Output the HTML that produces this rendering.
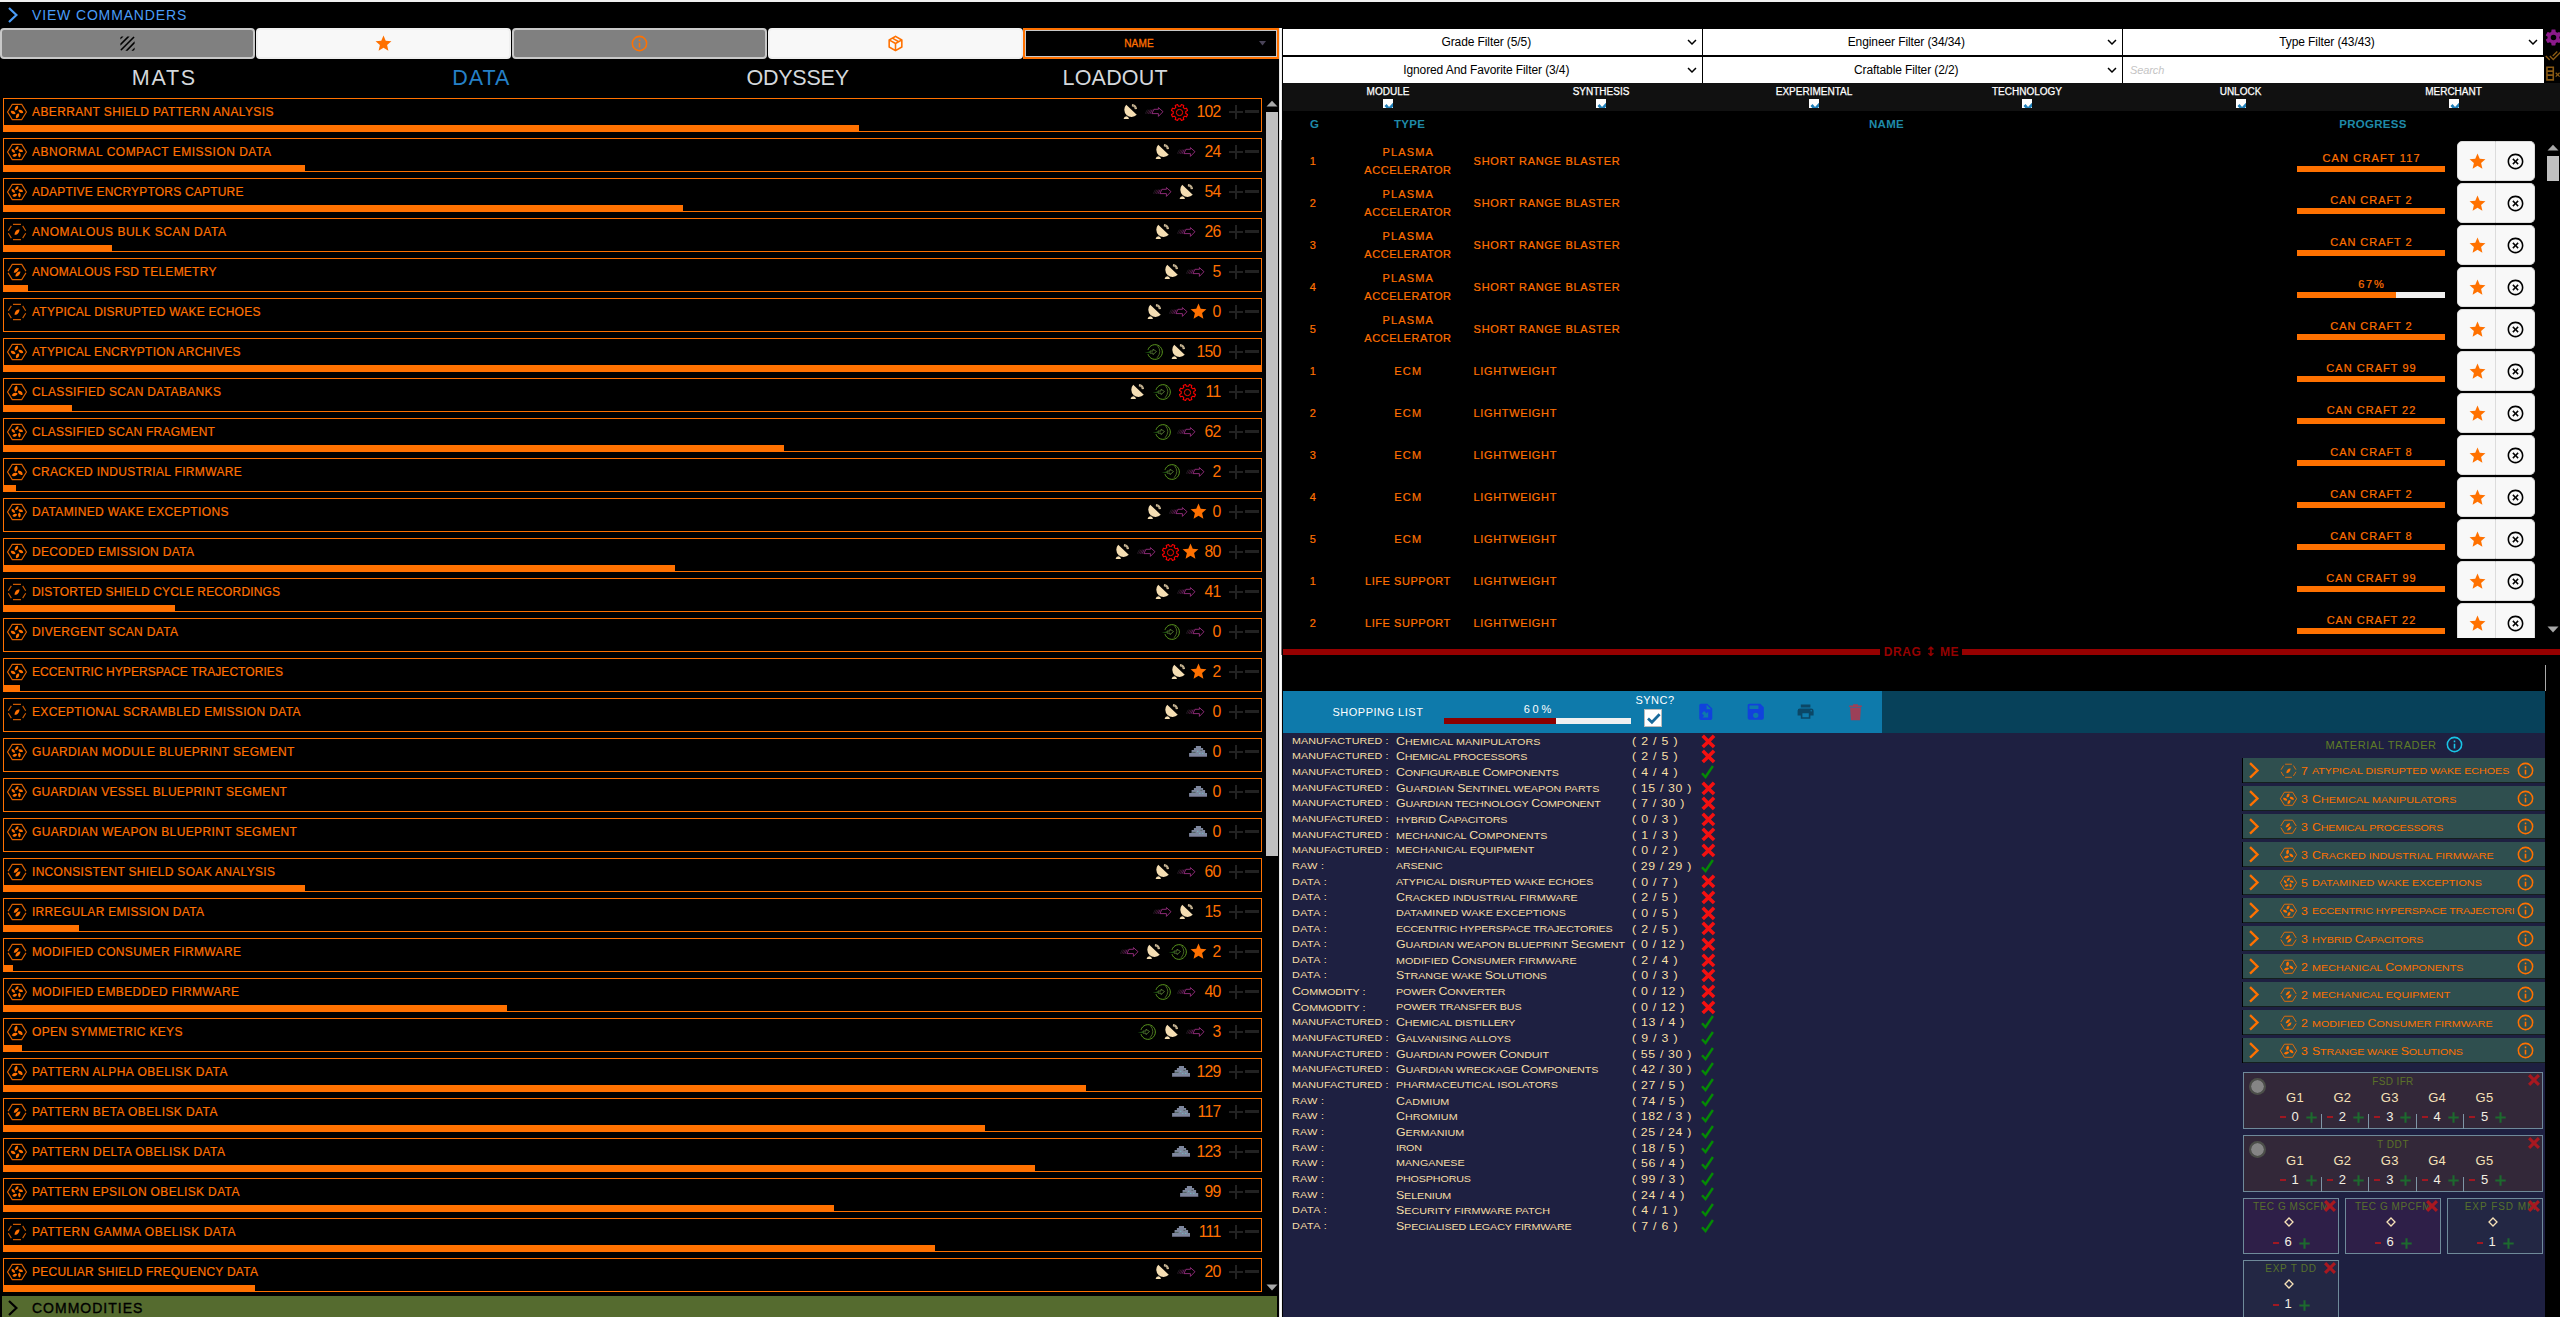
<!DOCTYPE html><html><head><meta charset="utf-8"><title>ED Materials</title><style>
*{box-sizing:border-box;margin:0;padding:0}
html,body{width:2560px;height:1317px;overflow:hidden;background:#000}
body{font-family:"Liberation Sans",sans-serif;position:relative;color:#ff7100}
.a{position:absolute}
.ic{position:absolute;overflow:visible}
.t{position:absolute;white-space:nowrap;text-transform:uppercase}
.n{position:absolute;white-space:nowrap}
/* left rows */
.row{position:absolute;left:3px;width:1259px;height:34px;border:1px solid #ff7100}
.bar{position:absolute;left:-1px;bottom:-1px;height:7px;background:#ff7100}
.rn{-webkit-text-stroke:.2px #ff7100;position:absolute;left:28px;top:0;height:26px;line-height:26px;font-size:12px;letter-spacing:.36px;white-space:nowrap}
.cnt{position:absolute;right:40.6px;top:-.2px;height:26px;line-height:26px;font-size:15.8px;white-space:nowrap;letter-spacing:-.8px}
.gi{position:absolute;left:2px;top:4px;width:22px;height:18px;color:#ff7100}
.ri{position:absolute;top:4px;width:18px;height:18px}
.pm{position:absolute;background:#222}
/* top buttons */
.tb{position:absolute;top:28px;height:31px;width:255px;border:2px solid #c8c8c8;border-radius:4px;background:#808080}
.tb.w{background:#f8f8f8;border-color:#f0f0f0}
.tab{position:absolute;top:64.1px;height:28px;line-height:28px;font-size:21.5px;letter-spacing:.6px;color:#d4d8dc;white-space:nowrap;transform:translateX(-50%)}
/* filters */
.fb{position:absolute;height:26px;background:#fff;color:#000;font-size:12px;line-height:27px;letter-spacing:-.1px;text-align:center;white-space:nowrap}
.ck{position:absolute;font-size:10px;letter-spacing:0;color:#fff;transform:translateX(-50%);white-space:nowrap;line-height:12px;height:12px;top:85.5px;-webkit-text-stroke:.25px #fff}
.cb{position:absolute;top:99px;width:10px;height:9px;background:#fff;overflow:hidden}
.th{position:absolute;top:116.7px;height:14px;line-height:14px;font-size:11.5px;font-weight:bold;color:#1f8aa8;white-space:nowrap;transform:translateX(-50%);letter-spacing:.3px}
.td{-webkit-text-stroke:.2px #ff7100;position:absolute;font-size:11px;letter-spacing:.3px;white-space:nowrap;text-transform:uppercase}
.tdc{transform:translateX(-50%);text-align:center}
.bt{position:absolute;height:40px;background:#f8f8f8;border:1px solid #dcdcdc}
.pb{position:absolute;left:2297px;width:148px;height:6px;background:#ff7100}
/* shopping list */
.sl{position:absolute;font-size:9.6px;height:12px;line-height:12px;color:#f7dfa6;white-space:nowrap;transform:scaleX(1.12);transform-origin:0 50%}
.sl b{font-weight:normal;font-size:11px}
.mt{position:absolute;left:2243px;width:302px;height:24px;background:#2f4f4f;box-shadow:-1px 0 0 #000, 0 1px 0 #15201f, -1px 1px 0 #000}
.mtt{position:absolute;left:68.8px;top:1.2px;height:24px;line-height:24px;font-size:9.6px;color:#ff7100;white-space:nowrap;transform:scaleX(1.12);transform-origin:0 50%}
.mtt b{font-weight:normal;font-size:11px}
.wl{position:absolute;border:1px solid #6f8a9a;}
.wt{position:absolute;font-size:10px;color:#6b8e23;white-space:nowrap;transform:translateX(-50%);line-height:11px;height:11px;opacity:.72}
.wg{position:absolute;font-size:13px;color:#f7e2b8;transform:translateX(-50%);white-space:nowrap;line-height:14px;height:14px;letter-spacing:.3px}
.wn{position:absolute;font-size:13px;color:#f4f0e4;transform:translateX(-50%);white-space:nowrap;line-height:14px;height:14px}
</style></head><body>
<svg width="0" height="0" style="position:absolute"><defs>
<symbol id="i-star" viewBox="0 0 24 24"><path d="M12,17.27L18.18,21L16.54,13.97L22,9.24L14.81,8.62L12,2L9.19,8.62L2,9.24L7.45,13.97L5.82,21L12,17.27Z"/></symbol>
<symbol id="i-info" viewBox="0 0 24 24"><path d="M11,9H13V7H11M12,20C7.59,20 4,16.41 4,12C4,7.59 7.59,4 12,4C16.41,4 20,7.59 20,12C20,16.41 16.41,20 12,20M12,2A10,10 0 0,0 2,12A10,10 0 0,0 12,22A10,10 0 0,0 22,12A10,10 0 0,0 12,2M11,17H13V11H11V17Z"/></symbol>
<symbol id="i-closec" viewBox="0 0 24 24"><path d="M12,20C7.59,20 4,16.41 4,12C4,7.59 7.59,4 12,4C16.41,4 20,7.59 20,12C20,16.41 16.41,20 12,20M12,2C6.47,2 2,6.47 2,12C2,17.53 6.47,22 12,22C17.53,22 22,17.53 22,12C22,6.47 17.53,2 12,2M14.59,8L12,10.59L9.41,8L8,9.41L10.59,12L8,14.59L9.41,16L12,13.41L14.59,16L16,14.59L13.41,12L16,9.41L14.59,8Z"/></symbol>
<symbol id="i-chev" viewBox="0 0 24 24"><path d="M8.59,16.58L13.17,12L8.59,7.41L10,6L16,12L10,18L8.59,16.58Z"/></symbol>
<symbol id="i-chevd" viewBox="0 0 24 24"><path d="M7.41,8.58L12,13.17L16.59,8.58L18,10L12,16L6,10L7.41,8.58Z"/></symbol>
<symbol id="i-cog" viewBox="0 0 24 24"><path d="M12,15.5A3.5,3.5 0 0,1 8.5,12A3.5,3.5 0 0,1 12,8.5A3.5,3.5 0 0,1 15.5,12A3.5,3.5 0 0,1 12,15.5M19.43,12.97C19.47,12.65 19.5,12.33 19.5,12C19.5,11.67 19.47,11.34 19.43,11L21.54,9.37C21.73,9.22 21.78,8.95 21.66,8.73L19.66,5.27C19.54,5.05 19.27,4.96 19.05,5.05L16.56,6.05C16.04,5.66 15.5,5.32 14.87,5.07L14.5,2.42C14.46,2.18 14.25,2 14,2H10C9.75,2 9.54,2.18 9.5,2.42L9.13,5.07C8.5,5.32 7.96,5.66 7.44,6.05L4.95,5.05C4.73,4.96 4.46,5.05 4.34,5.27L2.34,8.73C2.21,8.95 2.27,9.22 2.46,9.37L4.57,11C4.53,11.34 4.5,11.67 4.5,12C4.5,12.33 4.53,12.65 4.57,12.97L2.46,14.63C2.27,14.78 2.21,15.05 2.34,15.27L4.34,18.73C4.46,18.95 4.73,19.03 4.95,18.95L7.44,17.94C7.96,18.34 8.5,18.68 9.13,18.93L9.5,21.58C9.54,21.82 9.75,22 10,22H14C14.25,22 14.46,21.82 14.5,21.58L14.87,18.93C15.5,18.67 16.04,18.34 16.56,17.94L19.05,18.95C19.27,19.03 19.54,18.95 19.66,18.73L21.66,15.27C21.78,15.05 21.73,14.78 21.54,14.63L19.43,12.97Z"/></symbol>
<symbol id="i-cogo" viewBox="0 0 24 24"><path d="M12,8A4,4 0 0,1 16,12A4,4 0 0,1 12,16A4,4 0 0,1 8,12A4,4 0 0,1 12,8M12,10A2,2 0 0,0 10,12A2,2 0 0,0 12,14A2,2 0 0,0 14,12A2,2 0 0,0 12,10M10,22C9.75,22 9.54,21.82 9.5,21.58L9.13,18.93C8.5,18.68 7.96,18.34 7.44,17.94L4.95,18.95C4.73,19.03 4.46,18.95 4.34,18.73L2.34,15.27C2.21,15.05 2.27,14.78 2.46,14.63L4.57,12.97L4.5,12L4.57,11L2.46,9.37C2.27,9.22 2.21,8.95 2.34,8.73L4.34,5.27C4.46,5.05 4.73,4.96 4.95,5.05L7.44,6.05C7.96,5.66 8.5,5.32 9.13,5.07L9.5,2.42C9.54,2.18 9.75,2 10,2H14C14.25,2 14.46,2.18 14.5,2.42L14.87,5.07C15.5,5.32 16.04,5.66 16.56,6.05L19.05,5.05C19.27,4.96 19.54,5.05 19.66,5.27L21.66,8.73C21.79,8.95 21.73,9.22 21.54,9.37L19.43,11L19.5,12L19.43,13L21.54,14.63C21.73,14.78 21.79,15.05 21.66,15.27L19.66,18.73C19.54,18.95 19.27,19.04 19.05,18.95L16.56,17.95C16.04,18.34 15.5,18.68 14.87,18.93L14.5,21.58C14.46,21.82 14.25,22 14,22H10M11.25,4L10.88,6.61C9.68,6.86 8.62,7.5 7.85,8.39L5.44,7.35L4.69,8.65L6.8,10.2C6.4,11.37 6.4,12.64 6.8,13.8L4.68,15.36L5.43,16.66L7.86,15.62C8.63,16.5 9.68,17.14 10.87,17.38L11.24,20H12.76L13.13,17.39C14.32,17.14 15.37,16.5 16.14,15.62L18.57,16.66L19.32,15.36L17.2,13.81C17.6,12.64 17.6,11.37 17.2,10.2L19.31,8.65L18.56,7.35L16.15,8.39C15.38,7.5 14.32,6.86 13.12,6.62L12.75,4H11.25Z"/></symbol>
<symbol id="i-texture" viewBox="0 0 24 24"><path d="M9.29,21H12.12L21,12.12V9.29M19,21C19.55,21 20.05,20.78 20.41,20.41C20.78,20.05 21,19.55 21,19V17L17,21M5,3A2,2 0 0,0 3,5V7L7,3M11.88,3L3,11.88V14.71L14.71,3M19.5,3.08L3.08,19.5C3.17,19.85 3.35,20.16 3.59,20.41C3.84,20.65 4.15,20.83 4.5,20.92L20.93,4.5C20.74,3.8 20.2,3.26 19.5,3.08Z"/></symbol>
<symbol id="i-dish" viewBox="0 0 24 24"><path d="M11.86,2L11.34,3.93C15.75,4.78 19.2,8.23 20.05,12.65L22,12.13C20.95,7.03 16.96,3.04 11.86,2M10.82,5.86L10.3,7.81C13.34,8.27 15.72,10.65 16.18,13.68L18.12,13.16C17.46,9.44 14.55,6.5 10.82,5.86M3.72,9.69C3.25,10.73 3,11.86 3,13C3,14.95 3.71,16.82 5,18.28V22H8V20.41C8.95,20.8 9.97,21 11,21C12.14,21 13.27,20.75 14.3,20.28L3.72,9.69M9.79,9.76L9.26,11.72A3,3 0 0,1 12.26,14.72L14.23,14.2C14,11.86 12.13,10 9.79,9.76Z"/></symbol>
<symbol id="i-printer" viewBox="0 0 24 24"><path d="M18,3H6V7H18M19,12A1,1 0 0,1 18,11A1,1 0 0,1 19,10A1,1 0 0,1 20,11A1,1 0 0,1 19,12M16,19H8V14H16M19,8H5A3,3 0 0,0 2,11V17H6V21H18V17H22V11A3,3 0 0,0 19,8Z"/></symbol>
<symbol id="i-trash" viewBox="0 0 24 24"><path d="M19,4H15.5L14.5,3H9.5L8.5,4H5V6H19M6,19A2,2 0 0,0 8,21H16A2,2 0 0,0 18,19V7H6V19Z"/></symbol>
<symbol id="i-save" viewBox="0 0 24 24"><path d="M15,9H5V5H15M12,19A3,3 0 0,1 9,16A3,3 0 0,1 12,13A3,3 0 0,1 15,16A3,3 0 0,1 12,19M17,3H5C3.89,3 3,3.9 3,5V19A2,2 0 0,0 5,21H19A2,2 0 0,0 21,19V7L17,3Z"/></symbol>
<symbol id="i-sd" viewBox="0 0 24 24"><path d="M18,2H10L4,8V20A2,2 0 0,0 6,22H18A2,2 0 0,0 20,20V4A2,2 0 0,0 18,2M13,8H11V4H13V8M16,8H14V4H16V8M19,8H17V4H19V8M12,19A3,3 0 0,1 9,16A3,3 0 0,1 12,13A3,3 0 0,1 15,16A3,3 0 0,1 12,19Z"/></symbol>
<symbol id="i-fileimp" viewBox="0 0 24 24"><path d="M14,2H6A2,2 0 0,0 4,4V20A2,2 0 0,0 6,22H18A2,2 0 0,0 20,20V8L14,2M13,9V3.5L18.5,9H13M10.05,11.22L12.88,14.05L15,11.93V19H7.93L10.05,16.88L7.22,14.05L10.05,11.22Z"/></symbol>
<symbol id="i-checkall" viewBox="0 0 24 24"><path d="M0.41,13.41L6,19L7.41,17.58L1.83,12M22.24,5.58L11.66,16.17L7.5,12L6.07,13.41L11.66,19L23.66,7M18,7L16.59,5.58L10.24,11.93L11.66,13.34L18,7Z"/></symbol>
<symbol id="i-checkb" viewBox="0 0 24 24"><path d="M9,20.42L2.79,14.21L5.62,11.38L9,14.77L18.88,4.88L21.71,7.71L9,20.42Z"/></symbol>
<symbol id="i-closet" viewBox="0 0 24 24"><path d="M20 6.91L17.09 4L12 9.09L6.91 4L4 6.91L9.09 12L4 17.09L6.91 20L12 14.91L17.09 20L20 17.09L14.91 12L20 6.91Z"/></symbol>
<symbol id="i-plus" viewBox="0 0 24 24"><path d="M19,13H13V19H11V13H5V11H11V5H13V11H19V13Z"/></symbol>
<symbol id="i-minus" viewBox="0 0 24 24"><path d="M19,13H5V11H19V13Z"/></symbol>
<symbol id="i-pkg" viewBox="0 0 24 24"><path d="M21,16.5C21,16.88 20.79,17.21 20.47,17.38L12.57,21.82C12.41,21.94 12.21,22 12,22C11.79,22 11.59,21.94 11.43,21.82L3.53,17.38C3.21,17.21 3,16.88 3,16.5V7.5C3,7.12 3.21,6.79 3.53,6.62L11.43,2.18C11.59,2.06 11.79,2 12,2C12.21,2 12.41,2.06 12.57,2.18L20.47,6.62C20.79,6.79 21,7.12 21,7.5V16.5M12,4.15L10.11,5.22L16,8.61L17.96,7.5L12,4.15M6.04,7.5L12,10.85L13.96,9.75L8.08,6.35L6.04,7.5M5,15.91L11,19.29V12.58L5,9.21V15.91M19,15.91V9.21L13,12.58V19.29L19,15.91Z"/></symbol>
<symbol id="i-check" viewBox="0 0 24 24"><path d="M21,7L9,19L3.5,13.5L4.91,12.09L9,16.17L19.59,5.59L21,7Z"/></symbol>
<symbol id="i-tablex" viewBox="0 0 24 24"><path d="M4,3H14V21H4V3M6,5V8H12V5H6M6,10V13H12V10H6M6,15V19H12V15H6M16.6,10.5L18.5,12.4L20.4,10.5L21.5,11.6L19.6,13.5L21.5,15.4L20.4,16.5L18.5,14.6L16.6,16.5L15.5,15.4L17.4,13.5L15.5,11.6L16.6,10.5Z"/></symbol>
<symbol id="g1" viewBox="0 0 22 18"><path d="M2.31,7.78 L5.33,2.92 M7.03,1.40 L14.97,1.40 M16.67,2.92 L19.69,7.78 M19.69,10.22 L16.67,15.08 M14.97,16.60 L7.03,16.60 M5.33,15.08 L2.31,10.22 " fill="none" stroke="currentColor" stroke-width="1.15" opacity=".8"/><path d="M8.51,11.72 C11.08,12.14 13.36,9.84 13.49,6.48 C10.92,6.06 8.64,8.36 8.51,11.72 Z" fill="currentColor"/></symbol>
<symbol id="g2" viewBox="0 0 22 18"><path d="M2.05,8.10 L6.28,1.40 L15.72,1.40 L19.95,8.10 M19.95,9.90 L15.72,16.60 L6.28,16.60 L2.05,9.90" fill="none" stroke="currentColor" stroke-width="1.15" opacity=".85"/><path d="M7.69,9.65 C10.05,10.11 12.43,8.04 12.91,4.95 C10.55,4.49 8.17,6.56 7.69,9.65 ZM9.29,13.35 C11.65,13.81 14.03,11.74 14.51,8.65 C12.15,8.19 9.77,10.26 9.29,13.35 Z" fill="currentColor"/></symbol>
<symbol id="g3" viewBox="0 0 22 18"><path d="M1.55,9.00 L6.28,1.40 L15.72,1.40 L20.45,9.00 L15.72,16.60 L6.28,16.60 Z" fill="none" stroke="currentColor" stroke-width="1.15" opacity=".85"/><path d="M9.05,8.74 C11.45,8.21 12.33,5.56 10.85,2.79 C8.44,3.32 7.57,5.98 9.05,8.74 Z M12.20,7.43 C11.45,9.79 13.32,11.87 16.45,11.98 C17.20,9.63 15.33,7.54 12.20,7.43 Z M11.76,10.82 C10.09,9.00 7.35,9.57 5.69,12.23 C7.36,14.05 10.10,13.48 11.76,10.82 Z " fill="currentColor"/></symbol>
<symbol id="g4" viewBox="0 0 22 18"><path d="M1.55,9.00 L6.28,1.40 L15.72,1.40 L20.45,9.00 L15.72,16.60 L6.28,16.60 Z" fill="none" stroke="currentColor" stroke-width="1.15" opacity=".85"/><path d="M8.89,7.47 C11.14,7.67 12.59,5.61 12.02,2.80 C9.77,2.60 8.32,4.67 8.89,7.47 Z M12.53,6.89 C12.33,9.14 14.39,10.59 17.20,10.02 C17.40,7.77 15.33,6.32 12.53,6.89 Z M13.11,10.53 C10.86,10.33 9.41,12.39 9.98,15.20 C12.23,15.40 13.68,13.33 13.11,10.53 Z M9.47,11.11 C9.67,8.86 7.61,7.41 4.80,7.98 C4.60,10.23 6.67,11.68 9.47,11.11 Z " fill="currentColor"/></symbol>
<symbol id="g5" viewBox="0 0 22 18"><path d="M1.55,9.00 L6.28,1.40 L15.72,1.40 L20.45,9.00 L15.72,16.60 L6.28,16.60 Z" fill="none" stroke="currentColor" stroke-width="1.15" opacity=".85"/><path d="M9.22,7.00 C11.18,7.41 12.69,5.74 12.51,3.20 C10.55,2.80 9.04,4.47 9.22,7.00 Z M12.35,6.69 C12.57,8.68 14.63,9.60 16.98,8.64 C16.76,6.66 14.70,5.73 12.35,6.69 Z M13.61,9.57 C11.79,10.39 11.55,12.64 13.19,14.57 C15.01,13.75 15.25,11.51 13.61,9.57 Z M11.26,11.66 C9.92,10.19 7.71,10.65 6.37,12.80 C7.72,14.28 9.93,13.82 11.26,11.66 Z M8.55,10.07 C9.54,8.34 8.42,6.38 5.95,5.78 C4.96,7.51 6.08,9.47 8.55,10.07 Z " fill="currentColor"/></symbol>
<symbol id="arrow" viewBox="0 0 19 10"><path d="M8.9,2.3 H13.4 V0.6 L18,4.7 L13.4,9.4 V6.6 H6.9 Z" fill="none" stroke="#a23088" stroke-width=".85" stroke-linejoin="miter"/><path d="M0.2,6.8 L2.4,2.6" stroke="#2c2230" stroke-width=".7" fill="none"/><path d="M1.8,6.8 L4.0,2.6" stroke="#4a2038" stroke-width=".7" fill="none"/><path d="M3.4,6.8 L5.6,2.6" stroke="#6a2458" stroke-width=".7" fill="none"/><path d="M5.0,6.8 L7.2,2.6" stroke="#8c2c86" stroke-width=".75" fill="none"/></symbol>
<symbol id="dish" viewBox="0 0 18 18"><path d="M5.23,1.65 A7.3,7.3 0 0 0 15.77,11.75 Z" fill="#f5deb3"/><path d="M2.6,16.1 Q3.1,13.5 5.3,13.3 Q7.5,13.5 8,16.1 Z" fill="#f5deb3"/><path d="M6.6,12 L5.6,13.6" stroke="#9a927e" stroke-width="1"/><path d="M10.9,2.2 A4.6,4.6 0 0 1 15.0,6.2" fill="none" stroke="#f5deb3" stroke-width="2.2" opacity=".82"/><circle cx="12.6" cy="3.0" r=".45" fill="#333"/><circle cx="13.9" cy="4.2" r=".45" fill="#333"/></symbol>
<symbol id="gear" viewBox="0 0 20 20"><path d="M11.11,3.39 L12.03,1.54 L14.55,2.58 L13.89,4.55 L15.45,6.11 L17.42,5.45 L18.46,7.97 L16.61,8.89 L16.61,11.11 L18.46,12.03 L17.42,14.55 L15.45,13.89 L13.89,15.45 L14.55,17.42 L12.03,18.46 L11.11,16.61 L8.89,16.61 L7.97,18.46 L5.45,17.42 L6.11,15.45 L4.55,13.89 L2.58,14.55 L1.54,12.03 L3.39,11.11 L3.39,8.89 L1.54,7.97 L2.58,5.45 L4.55,6.11 L6.11,4.55 L5.45,2.58 L7.97,1.54 L8.89,3.39 Z" fill="none" stroke="#ff0000" stroke-width="1.15" stroke-linejoin="round"/><circle cx="10" cy="10" r="3.3" fill="none" stroke="#f01000" stroke-width="1.05"/></symbol>
<symbol id="gcirc" viewBox="0 0 22 20"><path d="M4.97,7.85 A7.35,7.35 0 1 1 4.97,12.15" fill="none" stroke="#62a520" stroke-width=".9"/><path d="M14.46,3.67 Q19.4,9.8 14.0,15.86" fill="none" stroke="#4d6f26" stroke-width=".9"/><path d="M7,9.06 H10 V7.2 L13.5,9.53 L10,12.6 V11.17 H7 Z" fill="none" stroke="#5d8538" stroke-width=".8"/><path d="M1.6,10.5 L7,9.5 L7,11.1 Z" fill="#1f5a12"/></symbol>
<symbol id="guard" viewBox="0 0 18.5 11"><path d="M6.9,0.1 H12 V2 H14.1 V4.1 H16.1 V6.9 H18.4 V10.7 H0.1 V6.9 H2.6 V4.1 H4.9 V2 H6.9 Z" fill="#7d869d"/><path d="M0.1,10.5 H18.4" stroke="#5d5870" stroke-width=".6"/><path d="M8.3,5.3 h1 M10.3,7.4 h1 M13.3,7.4 h1" stroke="#6fd0d0" stroke-width=".9"/><path d="M3.2,6.4 h3.4 M11.4,4.3 h1.8" stroke="#3a5040" stroke-width=".7"/></symbol>
</defs></svg>
<div class="a" style="left:0;top:0;width:2560px;height:2px;background:#f0f0f0"></div>
<svg class="ic" style="left:7.5px;top:6.5px;width:10px;height:16px" viewBox="0 0 10 16"><path d="M1,1 L8.4,8 L1,15" fill="none" stroke="#4a9cf8" stroke-width="2.2"/></svg>
<div class="t" style="left:32px;top:6px;height:18px;line-height:18px;font-size:14px;letter-spacing:.85px;color:#4a9cf8">View Commanders</div>
<div class="tb" style="left:0px"></div>
<div class="tb w" style="left:256px"></div>
<div class="tb" style="left:512px"></div>
<div class="tb w" style="left:768px"></div>
<svg class="ic" style="left:118px;top:34px;width:19px;height:19px;fill:#000;"><use href="#i-texture"/></svg>
<svg class="ic" style="left:374px;top:34px;width:19px;height:19px;fill:#ff7100;"><use href="#i-star"/></svg>
<svg class="ic" style="left:630px;top:33.5px;width:19px;height:19px;fill:#ff7100;"><use href="#i-info"/></svg>
<svg class="ic" style="left:885.5px;top:33.5px;width:19px;height:19px;fill:#ff7100;"><use href="#i-pkg"/></svg>
<div class="a" style="left:1023px;top:28px;width:256px;height:31px;border:2px solid #ff7100;background:#000"><div class="a" style="left:0;top:0;right:0;bottom:0;border:1px solid #c8c8c8"></div></div>
<div class="t" style="left:1139px;top:37px;height:14px;line-height:14px;font-size:10px;transform:translateX(-50%);letter-spacing:.2px;-webkit-text-stroke:.3px #ff7100">Name</div>
<svg class="ic" style="left:1259px;top:40.5px;width:8px;height:5px"><path d="M0,0 H7 L3.5,4.5 Z" fill="#4a4458"/></svg>
<div class="tab" style="left:163.5px;color:#d4d8dc;letter-spacing:1.716px"><span style="margin-right:-1.716px">MATS</span></div>
<div class="tab" style="left:480.9px;color:#2580c8;letter-spacing:0.961px"><span style="margin-right:-0.961px">DATA</span></div>
<div class="tab" style="left:797.6px;color:#d4d8dc;letter-spacing:-0.236px"><span style="margin-right:--0.236px">ODYSSEY</span></div>
<div class="tab" style="left:1115.1px;color:#d4d8dc;letter-spacing:0.184px"><span style="margin-right:-0.184px">LOADOUT</span></div>
<div class="row" style="top:98px"><div class="bar" style="width:856.1px"></div><svg class="gi"><use href="#g4"/></svg><div class="rn" style="letter-spacing:0.373px">ABERRANT SHIELD PATTERN ANALYSIS</div><div class="cnt">102</div><svg class="ri" style="left:1165.5px;top:3.5px;width:19px;height:19px"><use href="#gear"/></svg><svg class="ri" style="left:1140.8px;top:8px;width:19px;height:10px"><use href="#arrow"/></svg><svg class="ri" style="left:1116.8px;top:3.7px"><use href="#dish"/></svg><div class="pm" style="left:1225px;top:12px;width:14px;height:2px"></div><div class="pm" style="left:1231px;top:6px;width:2px;height:14px"></div><div class="pm" style="left:1241px;top:11.3px;width:14px;height:3px"></div></div>
<div class="row" style="top:138px"><div class="bar" style="width:302.2px"></div><svg class="gi"><use href="#g5"/></svg><div class="rn" style="letter-spacing:0.49px">ABNORMAL COMPACT EMISSION DATA</div><div class="cnt">24</div><svg class="ri" style="left:1173.3px;top:8px;width:19px;height:10px"><use href="#arrow"/></svg><svg class="ri" style="left:1149.3px;top:3.7px"><use href="#dish"/></svg><div class="pm" style="left:1225px;top:12px;width:14px;height:2px"></div><div class="pm" style="left:1231px;top:6px;width:2px;height:14px"></div><div class="pm" style="left:1241px;top:11.3px;width:14px;height:3px"></div></div>
<div class="row" style="top:178px"><div class="bar" style="width:679.9px"></div><svg class="gi"><use href="#g5"/></svg><div class="rn" style="letter-spacing:0.198px">ADAPTIVE ENCRYPTORS CAPTURE</div><div class="cnt">54</div><svg class="ri" style="left:1173.3px;top:3.7px"><use href="#dish"/></svg><svg class="ri" style="left:1149.3px;top:8px;width:19px;height:10px"><use href="#arrow"/></svg><div class="pm" style="left:1225px;top:12px;width:14px;height:2px"></div><div class="pm" style="left:1231px;top:6px;width:2px;height:14px"></div><div class="pm" style="left:1241px;top:11.3px;width:14px;height:3px"></div></div>
<div class="row" style="top:218px"><div class="bar" style="width:109.1px"></div><svg class="gi"><use href="#g1"/></svg><div class="rn" style="letter-spacing:0.536px">ANOMALOUS BULK SCAN DATA</div><div class="cnt">26</div><svg class="ri" style="left:1173.3px;top:8px;width:19px;height:10px"><use href="#arrow"/></svg><svg class="ri" style="left:1149.3px;top:3.7px"><use href="#dish"/></svg><div class="pm" style="left:1225px;top:12px;width:14px;height:2px"></div><div class="pm" style="left:1231px;top:6px;width:2px;height:14px"></div><div class="pm" style="left:1241px;top:11.3px;width:14px;height:3px"></div></div>
<div class="row" style="top:258px"><div class="bar" style="width:25.2px"></div><svg class="gi"><use href="#g2"/></svg><div class="rn" style="letter-spacing:0.249px">ANOMALOUS FSD TELEMETRY</div><div class="cnt">5</div><svg class="ri" style="left:1181.8px;top:8px;width:19px;height:10px"><use href="#arrow"/></svg><svg class="ri" style="left:1157.8px;top:3.7px"><use href="#dish"/></svg><div class="pm" style="left:1225px;top:12px;width:14px;height:2px"></div><div class="pm" style="left:1231px;top:6px;width:2px;height:14px"></div><div class="pm" style="left:1241px;top:11.3px;width:14px;height:3px"></div></div>
<div class="row" style="top:298px"><svg class="gi"><use href="#g1"/></svg><div class="rn" style="letter-spacing:0.235px">ATYPICAL DISRUPTED WAKE ECHOES</div><div class="cnt">0</div><svg class="ri" style="left:1185.1px;top:3.3px;width:19px;height:19px;fill:#ff7100"><use href="#i-star"/></svg><svg class="ri" style="left:1165.0px;top:8px;width:19px;height:10px"><use href="#arrow"/></svg><svg class="ri" style="left:1141.0px;top:3.7px"><use href="#dish"/></svg><div class="pm" style="left:1225px;top:12px;width:14px;height:2px"></div><div class="pm" style="left:1231px;top:6px;width:2px;height:14px"></div><div class="pm" style="left:1241px;top:11.3px;width:14px;height:3px"></div></div>
<div class="row" style="top:338px"><div class="bar" style="width:1259.0px"></div><svg class="gi"><use href="#g4"/></svg><div class="rn" style="letter-spacing:0.219px">ATYPICAL ENCRYPTION ARCHIVES</div><div class="cnt">150</div><svg class="ri" style="left:1164.8px;top:3.7px"><use href="#dish"/></svg><svg class="ri" style="left:1138.8px;top:3px;width:22px;height:20px"><use href="#gcirc"/></svg><div class="pm" style="left:1225px;top:12px;width:14px;height:2px"></div><div class="pm" style="left:1231px;top:6px;width:2px;height:14px"></div><div class="pm" style="left:1241px;top:11.3px;width:14px;height:3px"></div></div>
<div class="row" style="top:378px"><div class="bar" style="width:69.2px"></div><svg class="gi"><use href="#g3"/></svg><div class="rn" style="letter-spacing:0.333px">CLASSIFIED SCAN DATABANKS</div><div class="cnt">11</div><svg class="ri" style="left:1174.0px;top:3.5px;width:19px;height:19px"><use href="#gear"/></svg><svg class="ri" style="left:1147.3px;top:3px;width:22px;height:20px"><use href="#gcirc"/></svg><svg class="ri" style="left:1124.3px;top:3.7px"><use href="#dish"/></svg><div class="pm" style="left:1225px;top:12px;width:14px;height:2px"></div><div class="pm" style="left:1231px;top:6px;width:2px;height:14px"></div><div class="pm" style="left:1241px;top:11.3px;width:14px;height:3px"></div></div>
<div class="row" style="top:418px"><div class="bar" style="width:780.6px"></div><svg class="gi"><use href="#g5"/></svg><div class="rn" style="letter-spacing:0.242px">CLASSIFIED SCAN FRAGMENT</div><div class="cnt">62</div><svg class="ri" style="left:1173.3px;top:8px;width:19px;height:10px"><use href="#arrow"/></svg><svg class="ri" style="left:1147.3px;top:3px;width:22px;height:20px"><use href="#gcirc"/></svg><div class="pm" style="left:1225px;top:12px;width:14px;height:2px"></div><div class="pm" style="left:1231px;top:6px;width:2px;height:14px"></div><div class="pm" style="left:1241px;top:11.3px;width:14px;height:3px"></div></div>
<div class="row" style="top:458px"><div class="bar" style="width:12.6px"></div><svg class="gi"><use href="#g3"/></svg><div class="rn" style="letter-spacing:0.331px">CRACKED INDUSTRIAL FIRMWARE</div><div class="cnt">2</div><svg class="ri" style="left:1181.8px;top:8px;width:19px;height:10px"><use href="#arrow"/></svg><svg class="ri" style="left:1155.8px;top:3px;width:22px;height:20px"><use href="#gcirc"/></svg><div class="pm" style="left:1225px;top:12px;width:14px;height:2px"></div><div class="pm" style="left:1231px;top:6px;width:2px;height:14px"></div><div class="pm" style="left:1241px;top:11.3px;width:14px;height:3px"></div></div>
<div class="row" style="top:498px"><svg class="gi"><use href="#g5"/></svg><div class="rn" style="letter-spacing:0.359px">DATAMINED WAKE EXCEPTIONS</div><div class="cnt">0</div><svg class="ri" style="left:1185.1px;top:3.3px;width:19px;height:19px;fill:#ff7100"><use href="#i-star"/></svg><svg class="ri" style="left:1165.0px;top:8px;width:19px;height:10px"><use href="#arrow"/></svg><svg class="ri" style="left:1141.0px;top:3.7px"><use href="#dish"/></svg><div class="pm" style="left:1225px;top:12px;width:14px;height:2px"></div><div class="pm" style="left:1231px;top:6px;width:2px;height:14px"></div><div class="pm" style="left:1241px;top:11.3px;width:14px;height:3px"></div></div>
<div class="row" style="top:538px"><div class="bar" style="width:671.5px"></div><svg class="gi"><use href="#g4"/></svg><div class="rn" style="letter-spacing:0.317px">DECODED EMISSION DATA</div><div class="cnt">80</div><svg class="ri" style="left:1176.6px;top:3.3px;width:19px;height:19px;fill:#ff7100"><use href="#i-star"/></svg><svg class="ri" style="left:1157.2px;top:3.5px;width:19px;height:19px"><use href="#gear"/></svg><svg class="ri" style="left:1132.5px;top:8px;width:19px;height:10px"><use href="#arrow"/></svg><svg class="ri" style="left:1108.5px;top:3.7px"><use href="#dish"/></svg><div class="pm" style="left:1225px;top:12px;width:14px;height:2px"></div><div class="pm" style="left:1231px;top:6px;width:2px;height:14px"></div><div class="pm" style="left:1241px;top:11.3px;width:14px;height:3px"></div></div>
<div class="row" style="top:578px"><div class="bar" style="width:172.1px"></div><svg class="gi"><use href="#g1"/></svg><div class="rn" style="letter-spacing:0.135px">DISTORTED SHIELD CYCLE RECORDINGS</div><div class="cnt">41</div><svg class="ri" style="left:1173.3px;top:8px;width:19px;height:10px"><use href="#arrow"/></svg><svg class="ri" style="left:1149.3px;top:3.7px"><use href="#dish"/></svg><div class="pm" style="left:1225px;top:12px;width:14px;height:2px"></div><div class="pm" style="left:1231px;top:6px;width:2px;height:14px"></div><div class="pm" style="left:1241px;top:11.3px;width:14px;height:3px"></div></div>
<div class="row" style="top:618px"><svg class="gi"><use href="#g4"/></svg><div class="rn" style="letter-spacing:0.327px">DIVERGENT SCAN DATA</div><div class="cnt">0</div><svg class="ri" style="left:1181.8px;top:8px;width:19px;height:10px"><use href="#arrow"/></svg><svg class="ri" style="left:1155.8px;top:3px;width:22px;height:20px"><use href="#gcirc"/></svg><div class="pm" style="left:1225px;top:12px;width:14px;height:2px"></div><div class="pm" style="left:1231px;top:6px;width:2px;height:14px"></div><div class="pm" style="left:1241px;top:11.3px;width:14px;height:3px"></div></div>
<div class="row" style="top:658px"><div class="bar" style="width:16.8px"></div><svg class="gi"><use href="#g4"/></svg><div class="rn" style="letter-spacing:0.069px">ECCENTRIC HYPERSPACE TRAJECTORIES</div><div class="cnt">2</div><svg class="ri" style="left:1185.1px;top:3.3px;width:19px;height:19px;fill:#ff7100"><use href="#i-star"/></svg><svg class="ri" style="left:1165.0px;top:3.7px"><use href="#dish"/></svg><div class="pm" style="left:1225px;top:12px;width:14px;height:2px"></div><div class="pm" style="left:1231px;top:6px;width:2px;height:14px"></div><div class="pm" style="left:1241px;top:11.3px;width:14px;height:3px"></div></div>
<div class="row" style="top:698px"><svg class="gi"><use href="#g1"/></svg><div class="rn" style="letter-spacing:0.331px">EXCEPTIONAL SCRAMBLED EMISSION DATA</div><div class="cnt">0</div><svg class="ri" style="left:1181.8px;top:8px;width:19px;height:10px"><use href="#arrow"/></svg><svg class="ri" style="left:1157.8px;top:3.7px"><use href="#dish"/></svg><div class="pm" style="left:1225px;top:12px;width:14px;height:2px"></div><div class="pm" style="left:1231px;top:6px;width:2px;height:14px"></div><div class="pm" style="left:1241px;top:11.3px;width:14px;height:3px"></div></div>
<div class="row" style="top:738px"><svg class="gi"><use href="#g5"/></svg><div class="rn" style="letter-spacing:0.352px">GUARDIAN MODULE BLUEPRINT SEGMENT</div><div class="cnt">0</div><svg class="ri" style="left:1184.9px;top:7px;width:18.5px;height:11px"><use href="#guard"/></svg><div class="pm" style="left:1225px;top:12px;width:14px;height:2px"></div><div class="pm" style="left:1231px;top:6px;width:2px;height:14px"></div><div class="pm" style="left:1241px;top:11.3px;width:14px;height:3px"></div></div>
<div class="row" style="top:778px"><svg class="gi"><use href="#g5"/></svg><div class="rn" style="letter-spacing:0.277px">GUARDIAN VESSEL BLUEPRINT SEGMENT</div><div class="cnt">0</div><svg class="ri" style="left:1184.9px;top:7px;width:18.5px;height:11px"><use href="#guard"/></svg><div class="pm" style="left:1225px;top:12px;width:14px;height:2px"></div><div class="pm" style="left:1231px;top:6px;width:2px;height:14px"></div><div class="pm" style="left:1241px;top:11.3px;width:14px;height:3px"></div></div>
<div class="row" style="top:818px"><svg class="gi"><use href="#g5"/></svg><div class="rn" style="letter-spacing:0.368px">GUARDIAN WEAPON BLUEPRINT SEGMENT</div><div class="cnt">0</div><svg class="ri" style="left:1184.9px;top:7px;width:18.5px;height:11px"><use href="#guard"/></svg><div class="pm" style="left:1225px;top:12px;width:14px;height:2px"></div><div class="pm" style="left:1231px;top:6px;width:2px;height:14px"></div><div class="pm" style="left:1241px;top:11.3px;width:14px;height:3px"></div></div>
<div class="row" style="top:858px"><div class="bar" style="width:302.2px"></div><svg class="gi"><use href="#g2"/></svg><div class="rn" style="letter-spacing:0.311px">INCONSISTENT SHIELD SOAK ANALYSIS</div><div class="cnt">60</div><svg class="ri" style="left:1173.3px;top:8px;width:19px;height:10px"><use href="#arrow"/></svg><svg class="ri" style="left:1149.3px;top:3.7px"><use href="#dish"/></svg><div class="pm" style="left:1225px;top:12px;width:14px;height:2px"></div><div class="pm" style="left:1231px;top:6px;width:2px;height:14px"></div><div class="pm" style="left:1241px;top:11.3px;width:14px;height:3px"></div></div>
<div class="row" style="top:898px"><div class="bar" style="width:75.5px"></div><svg class="gi"><use href="#g2"/></svg><div class="rn" style="letter-spacing:0.288px">IRREGULAR EMISSION DATA</div><div class="cnt">15</div><svg class="ri" style="left:1173.3px;top:3.7px"><use href="#dish"/></svg><svg class="ri" style="left:1149.3px;top:8px;width:19px;height:10px"><use href="#arrow"/></svg><div class="pm" style="left:1225px;top:12px;width:14px;height:2px"></div><div class="pm" style="left:1231px;top:6px;width:2px;height:14px"></div><div class="pm" style="left:1241px;top:11.3px;width:14px;height:3px"></div></div>
<div class="row" style="top:938px"><div class="bar" style="width:10.1px"></div><svg class="gi"><use href="#g2"/></svg><div class="rn" style="letter-spacing:0.348px">MODIFIED CONSUMER FIRMWARE</div><div class="cnt">2</div><svg class="ri" style="left:1185.1px;top:3.3px;width:19px;height:19px;fill:#ff7100"><use href="#i-star"/></svg><svg class="ri" style="left:1163.0px;top:3px;width:22px;height:20px"><use href="#gcirc"/></svg><svg class="ri" style="left:1140.0px;top:3.7px"><use href="#dish"/></svg><svg class="ri" style="left:1116.0px;top:8px;width:19px;height:10px"><use href="#arrow"/></svg><div class="pm" style="left:1225px;top:12px;width:14px;height:2px"></div><div class="pm" style="left:1231px;top:6px;width:2px;height:14px"></div><div class="pm" style="left:1241px;top:11.3px;width:14px;height:3px"></div></div>
<div class="row" style="top:978px"><div class="bar" style="width:503.6px"></div><svg class="gi"><use href="#g5"/></svg><div class="rn" style="letter-spacing:0.347px">MODIFIED EMBEDDED FIRMWARE</div><div class="cnt">40</div><svg class="ri" style="left:1173.3px;top:8px;width:19px;height:10px"><use href="#arrow"/></svg><svg class="ri" style="left:1147.3px;top:3px;width:22px;height:20px"><use href="#gcirc"/></svg><div class="pm" style="left:1225px;top:12px;width:14px;height:2px"></div><div class="pm" style="left:1231px;top:6px;width:2px;height:14px"></div><div class="pm" style="left:1241px;top:11.3px;width:14px;height:3px"></div></div>
<div class="row" style="top:1018px"><div class="bar" style="width:18.9px"></div><svg class="gi"><use href="#g3"/></svg><div class="rn" style="letter-spacing:0.318px">OPEN SYMMETRIC KEYS</div><div class="cnt">3</div><svg class="ri" style="left:1181.8px;top:8px;width:19px;height:10px"><use href="#arrow"/></svg><svg class="ri" style="left:1157.8px;top:3.7px"><use href="#dish"/></svg><svg class="ri" style="left:1131.8px;top:3px;width:22px;height:20px"><use href="#gcirc"/></svg><div class="pm" style="left:1225px;top:12px;width:14px;height:2px"></div><div class="pm" style="left:1231px;top:6px;width:2px;height:14px"></div><div class="pm" style="left:1241px;top:11.3px;width:14px;height:3px"></div></div>
<div class="row" style="top:1058px"><div class="bar" style="width:1082.7px"></div><svg class="gi"><use href="#g3"/></svg><div class="rn" style="letter-spacing:0.463px">PATTERN ALPHA OBELISK DATA</div><div class="cnt">129</div><svg class="ri" style="left:1167.9px;top:7px;width:18.5px;height:11px"><use href="#guard"/></svg><div class="pm" style="left:1225px;top:12px;width:14px;height:2px"></div><div class="pm" style="left:1231px;top:6px;width:2px;height:14px"></div><div class="pm" style="left:1241px;top:11.3px;width:14px;height:3px"></div></div>
<div class="row" style="top:1098px"><div class="bar" style="width:982.0px"></div><svg class="gi"><use href="#g2"/></svg><div class="rn" style="letter-spacing:0.409px">PATTERN BETA OBELISK DATA</div><div class="cnt">117</div><svg class="ri" style="left:1167.9px;top:7px;width:18.5px;height:11px"><use href="#guard"/></svg><div class="pm" style="left:1225px;top:12px;width:14px;height:2px"></div><div class="pm" style="left:1231px;top:6px;width:2px;height:14px"></div><div class="pm" style="left:1241px;top:11.3px;width:14px;height:3px"></div></div>
<div class="row" style="top:1138px"><div class="bar" style="width:1032.4px"></div><svg class="gi"><use href="#g4"/></svg><div class="rn" style="letter-spacing:0.435px">PATTERN DELTA OBELISK DATA</div><div class="cnt">123</div><svg class="ri" style="left:1167.9px;top:7px;width:18.5px;height:11px"><use href="#guard"/></svg><div class="pm" style="left:1225px;top:12px;width:14px;height:2px"></div><div class="pm" style="left:1231px;top:6px;width:2px;height:14px"></div><div class="pm" style="left:1241px;top:11.3px;width:14px;height:3px"></div></div>
<div class="row" style="top:1178px"><div class="bar" style="width:830.9px"></div><svg class="gi"><use href="#g5"/></svg><div class="rn" style="letter-spacing:0.355px">PATTERN EPSILON OBELISK DATA</div><div class="cnt">99</div><svg class="ri" style="left:1176.4px;top:7px;width:18.5px;height:11px"><use href="#guard"/></svg><div class="pm" style="left:1225px;top:12px;width:14px;height:2px"></div><div class="pm" style="left:1231px;top:6px;width:2px;height:14px"></div><div class="pm" style="left:1241px;top:11.3px;width:14px;height:3px"></div></div>
<div class="row" style="top:1218px"><div class="bar" style="width:931.7px"></div><svg class="gi"><use href="#g1"/></svg><div class="rn" style="letter-spacing:0.517px">PATTERN GAMMA OBELISK DATA</div><div class="cnt">111</div><svg class="ri" style="left:1167.9px;top:7px;width:18.5px;height:11px"><use href="#guard"/></svg><div class="pm" style="left:1225px;top:12px;width:14px;height:2px"></div><div class="pm" style="left:1231px;top:6px;width:2px;height:14px"></div><div class="pm" style="left:1241px;top:11.3px;width:14px;height:3px"></div></div>
<div class="row" style="top:1258px"><div class="bar" style="width:251.8px"></div><svg class="gi"><use href="#g5"/></svg><div class="rn" style="letter-spacing:0.248px">PECULIAR SHIELD FREQUENCY DATA</div><div class="cnt">20</div><svg class="ri" style="left:1173.3px;top:8px;width:19px;height:10px"><use href="#arrow"/></svg><svg class="ri" style="left:1149.3px;top:3.7px"><use href="#dish"/></svg><div class="pm" style="left:1225px;top:12px;width:14px;height:2px"></div><div class="pm" style="left:1231px;top:6px;width:2px;height:14px"></div><div class="pm" style="left:1241px;top:11.3px;width:14px;height:3px"></div></div>
<svg class="ic" style="left:1266px;top:100px;width:12px;height:8px"><path d="M0.5,6.5 L6,0.8 L11.5,6.5 Z" fill="#a8a8a8"/></svg>
<div class="a" style="left:1266px;top:112px;width:12px;height:744px;background:#c0c0c0"></div>
<svg class="ic" style="left:1266px;top:1284px;width:12px;height:8px"><path d="M0.5,0.5 L11.5,0.5 L6,6.5 Z" fill="#a8a8a8"/></svg>
<div class="a" style="left:2px;top:1296px;width:1275px;height:21px;background:#556b2f"></div>
<svg class="ic" style="left:7.5px;top:1299.5px;width:10px;height:16px" viewBox="0 0 10 16"><path d="M1,1 L8.4,8 L1,15" fill="none" stroke="#000" stroke-width="2.2"/></svg>
<div class="t" style="left:32px;top:1299px;height:18px;line-height:18px;font-size:14px;letter-spacing:1.0px;color:#000;-webkit-text-stroke:.35px #000">Commodities</div>
<div class="a" style="left:1279px;top:28px;width:3px;height:1289px;background:linear-gradient(90deg,#d0d0d0,#fff 45%,#e8e8e8)"></div>
<div class="fb" style="left:1283px;top:29px;width:418.5px;padding-right:12px">Grade Filter (5/5)</div>
<svg class="ic" style="left:1682.9px;top:32.8px;width:18px;height:18px;fill:#000;"><use href="#i-chevd"/></svg>
<div class="fb" style="left:1703px;top:29px;width:418.5px;padding-right:12px">Engineer Filter (34/34)</div>
<svg class="ic" style="left:2102.9px;top:32.8px;width:18px;height:18px;fill:#000;"><use href="#i-chevd"/></svg>
<div class="fb" style="left:2123px;top:29px;width:420px;padding-right:12px">Type Filter (43/43)</div>
<svg class="ic" style="left:2524.4px;top:32.8px;width:18px;height:18px;fill:#000;"><use href="#i-chevd"/></svg>
<div class="fb" style="left:1283px;top:57px;width:418.5px;padding-right:12px">Ignored And Favorite Filter (3/4)</div>
<svg class="ic" style="left:1682.9px;top:60.8px;width:18px;height:18px;fill:#000;"><use href="#i-chevd"/></svg>
<div class="fb" style="left:1703px;top:57px;width:418.5px;padding-right:12px">Craftable Filter (2/2)</div>
<svg class="ic" style="left:2102.9px;top:60.8px;width:18px;height:18px;fill:#000;"><use href="#i-chevd"/></svg>
<div class="fb" style="left:2123px;top:57px;width:420.5px;text-align:left;padding-left:7px;color:#c4c4c4;font-style:italic;font-size:11px">Search</div>
<svg class="ic" style="left:2544px;top:28px;width:19px;height:19px;fill:#8b1a8b;"><use href="#i-cog"/></svg>
<svg class="ic" style="left:2545px;top:47px;width:17px;height:17px;fill:#8a5a14;"><use href="#i-checkall"/></svg>
<svg class="ic" style="left:2543px;top:64px;width:19px;height:19px;fill:#8a5a14;"><use href="#i-tablex"/></svg>
<div class="a" style="left:1283px;top:83px;width:1277px;height:28px;background:#111"></div>
<div class="ck t" style="left:1388px">Module</div>
<div class="cb" style="left:1383.25px"><svg style="position:absolute;left:1px;top:2px;width:12px;height:12px" viewBox="0 0 24 24"><path d="M3,8 L10,16 L24,1" stroke="#1f7fb8" stroke-width="5.5" fill="none"/></svg></div>
<div class="ck t" style="left:1601px">Synthesis</div>
<div class="cb" style="left:1596.25px"><svg style="position:absolute;left:1px;top:2px;width:12px;height:12px" viewBox="0 0 24 24"><path d="M3,8 L10,16 L24,1" stroke="#1f7fb8" stroke-width="5.5" fill="none"/></svg></div>
<div class="ck t" style="left:1814px">Experimental</div>
<div class="cb" style="left:1809.25px"><svg style="position:absolute;left:1px;top:2px;width:12px;height:12px" viewBox="0 0 24 24"><path d="M3,8 L10,16 L24,1" stroke="#1f7fb8" stroke-width="5.5" fill="none"/></svg></div>
<div class="ck t" style="left:2027px">Technology</div>
<div class="cb" style="left:2022.25px"><svg style="position:absolute;left:1px;top:2px;width:12px;height:12px" viewBox="0 0 24 24"><path d="M3,8 L10,16 L24,1" stroke="#1f7fb8" stroke-width="5.5" fill="none"/></svg></div>
<div class="ck t" style="left:2240.5px">Unlock</div>
<div class="cb" style="left:2235.75px"><svg style="position:absolute;left:1px;top:2px;width:12px;height:12px" viewBox="0 0 24 24"><path d="M3,8 L10,16 L24,1" stroke="#1f7fb8" stroke-width="5.5" fill="none"/></svg></div>
<div class="ck t" style="left:2453.5px">Merchant</div>
<div class="cb" style="left:2448.75px"><svg style="position:absolute;left:1px;top:2px;width:12px;height:12px" viewBox="0 0 24 24"><path d="M3,8 L10,16 L24,1" stroke="#1f7fb8" stroke-width="5.5" fill="none"/></svg></div>
<div class="th" style="left:1314.5px">G</div>
<div class="th" style="left:1409.5px">TYPE</div>
<div class="th" style="left:1886.5px">NAME</div>
<div class="th" style="left:2373px">PROGRESS</div>
<div class="a" style="left:1283px;top:136px;width:1277px;height:501.5px;overflow:hidden">
<div class="td tdc" style="left:30px;top:17.5px;height:14px;line-height:14px">1</div>
<div class="td tdc" style="left:124.70000000000005px;top:7px;height:36px;line-height:18px"><span style="letter-spacing:1.104px;margin-right:-1.104px">PLASMA</span><br><span style="letter-spacing:0.514px;margin-right:-0.514px">ACCELERATOR</span></div>
<div class="td" style="left:190.5999999999999px;top:17.5px;height:14px;line-height:14px"><span style="letter-spacing:0.705px;margin-right:-0.705px">SHORT RANGE BLASTER</span></div>
<div class="td tdc" style="left:1088px;top:14.5px;height:14px;line-height:14px"><span style="letter-spacing:1.151px;margin-right:-1.151px">CAN CRAFT 117</span></div>
<div class="pb" style="left:1014px;top:30px"></div>
<div class="bt" style="left:1174px;top:5px;width:38.5px;border-radius:5px 0 0 5px"></div>
<div class="bt" style="left:1212.5px;top:5px;width:39.5px;border-radius:0 5px 5px 0;border-left:none"></div>
<svg class="ic" style="left:1184.5px;top:15.5px;width:19px;height:19px;fill:#ff7100;"><use href="#i-star"/></svg>
<svg class="ic" style="left:1222.5px;top:15.5px;width:19px;height:19px;fill:#000;"><use href="#i-closec"/></svg>
<div class="td tdc" style="left:30px;top:59.5px;height:14px;line-height:14px">2</div>
<div class="td tdc" style="left:124.70000000000005px;top:49px;height:36px;line-height:18px"><span style="letter-spacing:1.104px;margin-right:-1.104px">PLASMA</span><br><span style="letter-spacing:0.514px;margin-right:-0.514px">ACCELERATOR</span></div>
<div class="td" style="left:190.5999999999999px;top:59.5px;height:14px;line-height:14px"><span style="letter-spacing:0.705px;margin-right:-0.705px">SHORT RANGE BLASTER</span></div>
<div class="td tdc" style="left:1088px;top:56.5px;height:14px;line-height:14px"><span style="letter-spacing:0.954px;margin-right:-0.954px">CAN CRAFT 2</span></div>
<div class="pb" style="left:1014px;top:72px"></div>
<div class="bt" style="left:1174px;top:47px;width:38.5px;border-radius:5px 0 0 5px"></div>
<div class="bt" style="left:1212.5px;top:47px;width:39.5px;border-radius:0 5px 5px 0;border-left:none"></div>
<svg class="ic" style="left:1184.5px;top:57.5px;width:19px;height:19px;fill:#ff7100;"><use href="#i-star"/></svg>
<svg class="ic" style="left:1222.5px;top:57.5px;width:19px;height:19px;fill:#000;"><use href="#i-closec"/></svg>
<div class="td tdc" style="left:30px;top:101.5px;height:14px;line-height:14px">3</div>
<div class="td tdc" style="left:124.70000000000005px;top:91px;height:36px;line-height:18px"><span style="letter-spacing:1.104px;margin-right:-1.104px">PLASMA</span><br><span style="letter-spacing:0.514px;margin-right:-0.514px">ACCELERATOR</span></div>
<div class="td" style="left:190.5999999999999px;top:101.5px;height:14px;line-height:14px"><span style="letter-spacing:0.705px;margin-right:-0.705px">SHORT RANGE BLASTER</span></div>
<div class="td tdc" style="left:1088px;top:98.5px;height:14px;line-height:14px"><span style="letter-spacing:0.954px;margin-right:-0.954px">CAN CRAFT 2</span></div>
<div class="pb" style="left:1014px;top:114px"></div>
<div class="bt" style="left:1174px;top:89px;width:38.5px;border-radius:5px 0 0 5px"></div>
<div class="bt" style="left:1212.5px;top:89px;width:39.5px;border-radius:0 5px 5px 0;border-left:none"></div>
<svg class="ic" style="left:1184.5px;top:99.5px;width:19px;height:19px;fill:#ff7100;"><use href="#i-star"/></svg>
<svg class="ic" style="left:1222.5px;top:99.5px;width:19px;height:19px;fill:#000;"><use href="#i-closec"/></svg>
<div class="td tdc" style="left:30px;top:143.5px;height:14px;line-height:14px">4</div>
<div class="td tdc" style="left:124.70000000000005px;top:133px;height:36px;line-height:18px"><span style="letter-spacing:1.104px;margin-right:-1.104px">PLASMA</span><br><span style="letter-spacing:0.514px;margin-right:-0.514px">ACCELERATOR</span></div>
<div class="td" style="left:190.5999999999999px;top:143.5px;height:14px;line-height:14px"><span style="letter-spacing:0.705px;margin-right:-0.705px">SHORT RANGE BLASTER</span></div>
<div class="td tdc" style="left:1088px;top:140.5px;height:14px;line-height:14px"><span style="letter-spacing:1.814px;margin-right:-1.814px">67%</span></div>
<div class="pb" style="left:1014px;top:156px"></div>
<div class="pb" style="left:1112.716px;top:156px;width:49.28399999999999px;background:#f0f0f0"></div>
<div class="bt" style="left:1174px;top:131px;width:38.5px;border-radius:5px 0 0 5px"></div>
<div class="bt" style="left:1212.5px;top:131px;width:39.5px;border-radius:0 5px 5px 0;border-left:none"></div>
<svg class="ic" style="left:1184.5px;top:141.5px;width:19px;height:19px;fill:#ff7100;"><use href="#i-star"/></svg>
<svg class="ic" style="left:1222.5px;top:141.5px;width:19px;height:19px;fill:#000;"><use href="#i-closec"/></svg>
<div class="td tdc" style="left:30px;top:185.5px;height:14px;line-height:14px">5</div>
<div class="td tdc" style="left:124.70000000000005px;top:175px;height:36px;line-height:18px"><span style="letter-spacing:1.104px;margin-right:-1.104px">PLASMA</span><br><span style="letter-spacing:0.514px;margin-right:-0.514px">ACCELERATOR</span></div>
<div class="td" style="left:190.5999999999999px;top:185.5px;height:14px;line-height:14px"><span style="letter-spacing:0.705px;margin-right:-0.705px">SHORT RANGE BLASTER</span></div>
<div class="td tdc" style="left:1088px;top:182.5px;height:14px;line-height:14px"><span style="letter-spacing:0.954px;margin-right:-0.954px">CAN CRAFT 2</span></div>
<div class="pb" style="left:1014px;top:198px"></div>
<div class="bt" style="left:1174px;top:173px;width:38.5px;border-radius:5px 0 0 5px"></div>
<div class="bt" style="left:1212.5px;top:173px;width:39.5px;border-radius:0 5px 5px 0;border-left:none"></div>
<svg class="ic" style="left:1184.5px;top:183.5px;width:19px;height:19px;fill:#ff7100;"><use href="#i-star"/></svg>
<svg class="ic" style="left:1222.5px;top:183.5px;width:19px;height:19px;fill:#000;"><use href="#i-closec"/></svg>
<div class="td tdc" style="left:30px;top:227.5px;height:14px;line-height:14px">1</div>
<div class="td tdc" style="left:124.70000000000005px;top:227.5px;height:14px;line-height:14px"><span style="letter-spacing:1.303px;margin-right:-1.303px">ECM</span></div>
<div class="td" style="left:190.5999999999999px;top:227.5px;height:14px;line-height:14px"><span style="letter-spacing:0.637px;margin-right:-0.637px">LIGHTWEIGHT</span></div>
<div class="td tdc" style="left:1088px;top:224.5px;height:14px;line-height:14px"><span style="letter-spacing:1.028px;margin-right:-1.028px">CAN CRAFT 99</span></div>
<div class="pb" style="left:1014px;top:240px"></div>
<div class="bt" style="left:1174px;top:215px;width:38.5px;border-radius:5px 0 0 5px"></div>
<div class="bt" style="left:1212.5px;top:215px;width:39.5px;border-radius:0 5px 5px 0;border-left:none"></div>
<svg class="ic" style="left:1184.5px;top:225.5px;width:19px;height:19px;fill:#ff7100;"><use href="#i-star"/></svg>
<svg class="ic" style="left:1222.5px;top:225.5px;width:19px;height:19px;fill:#000;"><use href="#i-closec"/></svg>
<div class="td tdc" style="left:30px;top:269.5px;height:14px;line-height:14px">2</div>
<div class="td tdc" style="left:124.70000000000005px;top:269.5px;height:14px;line-height:14px"><span style="letter-spacing:1.303px;margin-right:-1.303px">ECM</span></div>
<div class="td" style="left:190.5999999999999px;top:269.5px;height:14px;line-height:14px"><span style="letter-spacing:0.637px;margin-right:-0.637px">LIGHTWEIGHT</span></div>
<div class="td tdc" style="left:1088px;top:266.5px;height:14px;line-height:14px"><span style="letter-spacing:0.965px;margin-right:-0.965px">CAN CRAFT 22</span></div>
<div class="pb" style="left:1014px;top:282px"></div>
<div class="bt" style="left:1174px;top:257px;width:38.5px;border-radius:5px 0 0 5px"></div>
<div class="bt" style="left:1212.5px;top:257px;width:39.5px;border-radius:0 5px 5px 0;border-left:none"></div>
<svg class="ic" style="left:1184.5px;top:267.5px;width:19px;height:19px;fill:#ff7100;"><use href="#i-star"/></svg>
<svg class="ic" style="left:1222.5px;top:267.5px;width:19px;height:19px;fill:#000;"><use href="#i-closec"/></svg>
<div class="td tdc" style="left:30px;top:311.5px;height:14px;line-height:14px">3</div>
<div class="td tdc" style="left:124.70000000000005px;top:311.5px;height:14px;line-height:14px"><span style="letter-spacing:1.303px;margin-right:-1.303px">ECM</span></div>
<div class="td" style="left:190.5999999999999px;top:311.5px;height:14px;line-height:14px"><span style="letter-spacing:0.637px;margin-right:-0.637px">LIGHTWEIGHT</span></div>
<div class="td tdc" style="left:1088px;top:308.5px;height:14px;line-height:14px"><span style="letter-spacing:0.954px;margin-right:-0.954px">CAN CRAFT 8</span></div>
<div class="pb" style="left:1014px;top:324px"></div>
<div class="bt" style="left:1174px;top:299px;width:38.5px;border-radius:5px 0 0 5px"></div>
<div class="bt" style="left:1212.5px;top:299px;width:39.5px;border-radius:0 5px 5px 0;border-left:none"></div>
<svg class="ic" style="left:1184.5px;top:309.5px;width:19px;height:19px;fill:#ff7100;"><use href="#i-star"/></svg>
<svg class="ic" style="left:1222.5px;top:309.5px;width:19px;height:19px;fill:#000;"><use href="#i-closec"/></svg>
<div class="td tdc" style="left:30px;top:353.5px;height:14px;line-height:14px">4</div>
<div class="td tdc" style="left:124.70000000000005px;top:353.5px;height:14px;line-height:14px"><span style="letter-spacing:1.303px;margin-right:-1.303px">ECM</span></div>
<div class="td" style="left:190.5999999999999px;top:353.5px;height:14px;line-height:14px"><span style="letter-spacing:0.637px;margin-right:-0.637px">LIGHTWEIGHT</span></div>
<div class="td tdc" style="left:1088px;top:350.5px;height:14px;line-height:14px"><span style="letter-spacing:0.954px;margin-right:-0.954px">CAN CRAFT 2</span></div>
<div class="pb" style="left:1014px;top:366px"></div>
<div class="bt" style="left:1174px;top:341px;width:38.5px;border-radius:5px 0 0 5px"></div>
<div class="bt" style="left:1212.5px;top:341px;width:39.5px;border-radius:0 5px 5px 0;border-left:none"></div>
<svg class="ic" style="left:1184.5px;top:351.5px;width:19px;height:19px;fill:#ff7100;"><use href="#i-star"/></svg>
<svg class="ic" style="left:1222.5px;top:351.5px;width:19px;height:19px;fill:#000;"><use href="#i-closec"/></svg>
<div class="td tdc" style="left:30px;top:395.5px;height:14px;line-height:14px">5</div>
<div class="td tdc" style="left:124.70000000000005px;top:395.5px;height:14px;line-height:14px"><span style="letter-spacing:1.303px;margin-right:-1.303px">ECM</span></div>
<div class="td" style="left:190.5999999999999px;top:395.5px;height:14px;line-height:14px"><span style="letter-spacing:0.637px;margin-right:-0.637px">LIGHTWEIGHT</span></div>
<div class="td tdc" style="left:1088px;top:392.5px;height:14px;line-height:14px"><span style="letter-spacing:0.954px;margin-right:-0.954px">CAN CRAFT 8</span></div>
<div class="pb" style="left:1014px;top:408px"></div>
<div class="bt" style="left:1174px;top:383px;width:38.5px;border-radius:5px 0 0 5px"></div>
<div class="bt" style="left:1212.5px;top:383px;width:39.5px;border-radius:0 5px 5px 0;border-left:none"></div>
<svg class="ic" style="left:1184.5px;top:393.5px;width:19px;height:19px;fill:#ff7100;"><use href="#i-star"/></svg>
<svg class="ic" style="left:1222.5px;top:393.5px;width:19px;height:19px;fill:#000;"><use href="#i-closec"/></svg>
<div class="td tdc" style="left:30px;top:437.5px;height:14px;line-height:14px">1</div>
<div class="td tdc" style="left:124.70000000000005px;top:437.5px;height:14px;line-height:14px"><span style="letter-spacing:0.536px;margin-right:-0.536px">LIFE SUPPORT</span></div>
<div class="td" style="left:190.5999999999999px;top:437.5px;height:14px;line-height:14px"><span style="letter-spacing:0.637px;margin-right:-0.637px">LIGHTWEIGHT</span></div>
<div class="td tdc" style="left:1088px;top:434.5px;height:14px;line-height:14px"><span style="letter-spacing:1.028px;margin-right:-1.028px">CAN CRAFT 99</span></div>
<div class="pb" style="left:1014px;top:450px"></div>
<div class="bt" style="left:1174px;top:425px;width:38.5px;border-radius:5px 0 0 5px"></div>
<div class="bt" style="left:1212.5px;top:425px;width:39.5px;border-radius:0 5px 5px 0;border-left:none"></div>
<svg class="ic" style="left:1184.5px;top:435.5px;width:19px;height:19px;fill:#ff7100;"><use href="#i-star"/></svg>
<svg class="ic" style="left:1222.5px;top:435.5px;width:19px;height:19px;fill:#000;"><use href="#i-closec"/></svg>
<div class="td tdc" style="left:30px;top:479.5px;height:14px;line-height:14px">2</div>
<div class="td tdc" style="left:124.70000000000005px;top:479.5px;height:14px;line-height:14px"><span style="letter-spacing:0.536px;margin-right:-0.536px">LIFE SUPPORT</span></div>
<div class="td" style="left:190.5999999999999px;top:479.5px;height:14px;line-height:14px"><span style="letter-spacing:0.637px;margin-right:-0.637px">LIGHTWEIGHT</span></div>
<div class="td tdc" style="left:1088px;top:476.5px;height:14px;line-height:14px"><span style="letter-spacing:0.965px;margin-right:-0.965px">CAN CRAFT 22</span></div>
<div class="pb" style="left:1014px;top:492px"></div>
<div class="bt" style="left:1174px;top:467px;width:38.5px;border-radius:5px 0 0 5px"></div>
<div class="bt" style="left:1212.5px;top:467px;width:39.5px;border-radius:0 5px 5px 0;border-left:none"></div>
<svg class="ic" style="left:1184.5px;top:477.5px;width:19px;height:19px;fill:#ff7100;"><use href="#i-star"/></svg>
<svg class="ic" style="left:1222.5px;top:477.5px;width:19px;height:19px;fill:#000;"><use href="#i-closec"/></svg>
</div>
<svg class="ic" style="left:2547px;top:144px;width:12px;height:8px"><path d="M0.5,6.5 L6,0.8 L11.5,6.5 Z" fill="#a8a8a8"/></svg>
<div class="a" style="left:2547px;top:156px;width:12px;height:25px;background:#c0c0c0"></div>
<svg class="ic" style="left:2547px;top:626px;width:12px;height:8px"><path d="M0.5,0.5 L11.5,0.5 L6,6.5 Z" fill="#a8a8a8"/></svg>
<div class="a" style="left:1281px;top:140px;width:1px;height:515px;background:#777"></div>
<div class="a" style="left:1283px;top:649px;width:596.5px;height:5.5px;background:#960000"></div>
<div class="a" style="left:1962px;top:649px;width:598px;height:5.5px;background:#960000"></div>
<div class="t" style="left:1921.5px;top:644.8px;height:15px;line-height:15px;font-size:12px;font-weight:bold;color:#960000;transform:translateX(-50%);letter-spacing:.55px">DRAG <span style="font-family:DejaVu Sans,sans-serif;font-size:13px;line-height:0;letter-spacing:0">&#8597;</span> ME</div>
<div class="a" style="left:2545px;top:665px;width:1px;height:26px;background:#aaa"></div>
<div class="a" style="left:1283px;top:691px;width:599px;height:42px;background:#0e7aab"></div>
<div class="a" style="left:1882px;top:691px;width:663px;height:42px;background:#07415a"></div>
<div class="a" style="left:1283px;top:733px;width:1262px;height:584px;background:#1e2041"></div>
<div class="t" style="left:1332.5px;top:705px;height:14px;line-height:14px;font-size:11px;color:#fff;letter-spacing:.5px">Shopping List</div>
<div class="t" style="left:1537.5px;top:702px;height:14px;line-height:14px;font-size:11px;color:#fff;transform:translateX(-50%);letter-spacing:2.8px"><span style="margin-right:-2.8px">60%</span></div>
<div class="a" style="left:1444px;top:718px;width:187px;height:6px;background:#f0f0f0"></div>
<div class="a" style="left:1444px;top:718px;width:112px;height:6px;background:#8b0000"></div>
<div class="t" style="left:1655px;top:693px;height:14px;line-height:14px;font-size:11px;color:#fff;transform:translateX(-50%);letter-spacing:.5px">Sync?</div>
<div class="a" style="left:1644px;top:709px;width:18px;height:18px;background:#fff;border:1px solid #bbb"></div>
<svg class="ic" style="left:1646.5px;top:712.5px;width:13.5px;height:11px" viewBox="0 0 13.5 11"><path d="M1,5.6 L4.9,9.3 L12.6,1.2" fill="none" stroke="#186a9c" stroke-width="2.7"/></svg>
<svg class="ic" style="left:1695.7px;top:702.3px;width:19.5px;height:19.5px;fill:#1142dc;"><use href="#i-fileimp"/></svg>
<svg class="ic" style="left:1744.8px;top:701.3px;width:21.5px;height:21.5px;fill:#1142dc;"><use href="#i-save"/></svg>
<svg class="ic" style="left:1796.2px;top:702.4px;width:19.2px;height:19.2px;fill:#0b4766;"><use href="#i-printer"/></svg>
<svg class="ic" style="left:1849px;top:703.8px;width:13px;height:16.5px" viewBox="0 0 13 16.5"><path d="M0.2,1.6 H12.8 V2.9 H0.2 Z M4,0.3 H9 V1.6 H4 Z M1.1,3.6 H11.9 L11.1,16.2 H1.9 Z" fill="#9c4058"/></svg>
<div class="sl" style="left:1291.5px;top:734.8px;letter-spacing:0.061px">MANUFACTURED :</div>
<div class="sl" style="left:1395.5px;top:734.8px;letter-spacing:0.064px"><b>C</b>HEMICAL MANIPULATORS</div>
<div class="sl" style="left:1632px;top:734.8px;font-size:11px;letter-spacing:0.723px">( 2 / 5 )</div>
<svg class="ic" style="left:1697.9px;top:730.6px;width:20.8px;height:20.8px;fill:#f41010;"><use href="#i-closet"/></svg>
<div class="sl" style="left:1291.5px;top:750.44px;letter-spacing:0.061px">MANUFACTURED :</div>
<div class="sl" style="left:1395.5px;top:750.44px;letter-spacing:-0.188px"><b>C</b>HEMICAL PROCESSORS</div>
<div class="sl" style="left:1632px;top:750.44px;font-size:11px;letter-spacing:0.723px">( 2 / 5 )</div>
<svg class="ic" style="left:1697.9px;top:746.25px;width:20.8px;height:20.8px;fill:#f41010;"><use href="#i-closet"/></svg>
<div class="sl" style="left:1291.5px;top:766.09px;letter-spacing:0.061px">MANUFACTURED :</div>
<div class="sl" style="left:1395.5px;top:766.09px;letter-spacing:-0.17px"><b>C</b>ONFIGURABLE <b>C</b>OMPONENTS</div>
<div class="sl" style="left:1632px;top:766.09px;font-size:11px;letter-spacing:0.723px">( 4 / 4 )</div>
<svg class="ic" style="left:1701.3px;top:764.89px;width:13px;height:14px" viewBox="0 0 13 14"><path d="M1.0,8.3 L4.5,12.0 L11.9,1.0" fill="none" stroke="#048a04" stroke-width="2.4"/></svg>
<div class="sl" style="left:1291.5px;top:781.73px;letter-spacing:0.061px">MANUFACTURED :</div>
<div class="sl" style="left:1395.5px;top:781.73px;letter-spacing:0.018px"><b>G</b>UARDIAN <b>S</b>ENTINEL WEAPON PARTS</div>
<div class="sl" style="left:1632px;top:781.73px;font-size:11px;letter-spacing:0.587px">( 15 / 30 )</div>
<svg class="ic" style="left:1697.9px;top:777.53px;width:20.8px;height:20.8px;fill:#f41010;"><use href="#i-closet"/></svg>
<div class="sl" style="left:1291.5px;top:797.38px;letter-spacing:0.061px">MANUFACTURED :</div>
<div class="sl" style="left:1395.5px;top:797.38px;letter-spacing:-0.161px"><b>G</b>UARDIAN TECHNOLOGY <b>C</b>OMPONENT</div>
<div class="sl" style="left:1632px;top:797.38px;font-size:11px;letter-spacing:0.646px">( 7 / 30 )</div>
<svg class="ic" style="left:1697.9px;top:793.18px;width:20.8px;height:20.8px;fill:#f41010;"><use href="#i-closet"/></svg>
<div class="sl" style="left:1291.5px;top:813.02px;letter-spacing:0.061px">MANUFACTURED :</div>
<div class="sl" style="left:1395.5px;top:813.02px;letter-spacing:-0.118px">HYBRID <b>C</b>APACITORS</div>
<div class="sl" style="left:1632px;top:813.02px;font-size:11px;letter-spacing:0.723px">( 0 / 3 )</div>
<svg class="ic" style="left:1697.9px;top:808.83px;width:20.8px;height:20.8px;fill:#f41010;"><use href="#i-closet"/></svg>
<div class="sl" style="left:1291.5px;top:828.67px;letter-spacing:0.061px">MANUFACTURED :</div>
<div class="sl" style="left:1395.5px;top:828.67px;letter-spacing:0.008px">MECHANICAL <b>C</b>OMPONENTS</div>
<div class="sl" style="left:1632px;top:828.67px;font-size:11px;letter-spacing:0.723px">( 1 / 3 )</div>
<svg class="ic" style="left:1697.9px;top:824.47px;width:20.8px;height:20.8px;fill:#f41010;"><use href="#i-closet"/></svg>
<div class="sl" style="left:1291.5px;top:844.31px;letter-spacing:0.061px">MANUFACTURED :</div>
<div class="sl" style="left:1395.5px;top:844.31px;letter-spacing:0.06px">MECHANICAL EQUIPMENT</div>
<div class="sl" style="left:1632px;top:844.31px;font-size:11px;letter-spacing:0.723px">( 0 / 2 )</div>
<svg class="ic" style="left:1697.9px;top:840.12px;width:20.8px;height:20.8px;fill:#f41010;"><use href="#i-closet"/></svg>
<div class="sl" style="left:1291.5px;top:859.96px;letter-spacing:0.303px">RAW :</div>
<div class="sl" style="left:1395.5px;top:859.96px;letter-spacing:-0.145px">ARSENIC</div>
<div class="sl" style="left:1632px;top:859.96px;font-size:11px;letter-spacing:0.587px">( 29 / 29 )</div>
<svg class="ic" style="left:1701.3px;top:858.76px;width:13px;height:14px" viewBox="0 0 13 14"><path d="M1.0,8.3 L4.5,12.0 L11.9,1.0" fill="none" stroke="#048a04" stroke-width="2.4"/></svg>
<div class="sl" style="left:1291.5px;top:875.61px;letter-spacing:0.403px">DATA :</div>
<div class="sl" style="left:1395.5px;top:875.61px;letter-spacing:-0.032px">ATYPICAL DISRUPTED WAKE ECHOES</div>
<div class="sl" style="left:1632px;top:875.61px;font-size:11px;letter-spacing:0.723px">( 0 / 7 )</div>
<svg class="ic" style="left:1697.9px;top:871.41px;width:20.8px;height:20.8px;fill:#f41010;"><use href="#i-closet"/></svg>
<div class="sl" style="left:1291.5px;top:891.25px;letter-spacing:0.403px">DATA :</div>
<div class="sl" style="left:1395.5px;top:891.25px;letter-spacing:0.012px"><b>C</b>RACKED INDUSTRIAL FIRMWARE</div>
<div class="sl" style="left:1632px;top:891.25px;font-size:11px;letter-spacing:0.723px">( 2 / 5 )</div>
<svg class="ic" style="left:1697.9px;top:887.05px;width:20.8px;height:20.8px;fill:#f41010;"><use href="#i-closet"/></svg>
<div class="sl" style="left:1291.5px;top:906.89px;letter-spacing:0.403px">DATA :</div>
<div class="sl" style="left:1395.5px;top:906.89px;letter-spacing:0.061px">DATAMINED WAKE EXCEPTIONS</div>
<div class="sl" style="left:1632px;top:906.89px;font-size:11px;letter-spacing:0.723px">( 0 / 5 )</div>
<svg class="ic" style="left:1697.9px;top:902.7px;width:20.8px;height:20.8px;fill:#f41010;"><use href="#i-closet"/></svg>
<div class="sl" style="left:1291.5px;top:922.54px;letter-spacing:0.403px">DATA :</div>
<div class="sl" style="left:1395.5px;top:922.54px;letter-spacing:-0.168px">ECCENTRIC HYPERSPACE TRAJECTORIES</div>
<div class="sl" style="left:1632px;top:922.54px;font-size:11px;letter-spacing:0.723px">( 2 / 5 )</div>
<svg class="ic" style="left:1697.9px;top:918.34px;width:20.8px;height:20.8px;fill:#f41010;"><use href="#i-closet"/></svg>
<div class="sl" style="left:1291.5px;top:938.18px;letter-spacing:0.403px">DATA :</div>
<div class="sl" style="left:1395.5px;top:938.18px;letter-spacing:0.0px"><b>G</b>UARDIAN WEAPON BLUEPRINT <b>S</b>EGMENT</div>
<div class="sl" style="left:1632px;top:938.18px;font-size:11px;letter-spacing:0.646px">( 0 / 12 )</div>
<svg class="ic" style="left:1697.9px;top:933.99px;width:20.8px;height:20.8px;fill:#f41010;"><use href="#i-closet"/></svg>
<div class="sl" style="left:1291.5px;top:953.83px;letter-spacing:0.403px">DATA :</div>
<div class="sl" style="left:1395.5px;top:953.83px;letter-spacing:0.006px">MODIFIED <b>C</b>ONSUMER FIRMWARE</div>
<div class="sl" style="left:1632px;top:953.83px;font-size:11px;letter-spacing:0.723px">( 2 / 4 )</div>
<svg class="ic" style="left:1697.9px;top:949.63px;width:20.8px;height:20.8px;fill:#f41010;"><use href="#i-closet"/></svg>
<div class="sl" style="left:1291.5px;top:969.47px;letter-spacing:0.403px">DATA :</div>
<div class="sl" style="left:1395.5px;top:969.47px;letter-spacing:-0.102px"><b>S</b>TRANGE WAKE <b>S</b>OLUTIONS</div>
<div class="sl" style="left:1632px;top:969.47px;font-size:11px;letter-spacing:0.723px">( 0 / 3 )</div>
<svg class="ic" style="left:1697.9px;top:965.27px;width:20.8px;height:20.8px;fill:#f41010;"><use href="#i-closet"/></svg>
<div class="sl" style="left:1291.5px;top:985.12px;letter-spacing:-0.034px"><b>C</b>OMMODITY :</div>
<div class="sl" style="left:1395.5px;top:985.12px;letter-spacing:-0.154px">POWER <b>C</b>ONVERTER</div>
<div class="sl" style="left:1632px;top:985.12px;font-size:11px;letter-spacing:0.646px">( 0 / 12 )</div>
<svg class="ic" style="left:1697.9px;top:980.92px;width:20.8px;height:20.8px;fill:#f41010;"><use href="#i-closet"/></svg>
<div class="sl" style="left:1291.5px;top:1000.76px;letter-spacing:-0.034px"><b>C</b>OMMODITY :</div>
<div class="sl" style="left:1395.5px;top:1000.76px;letter-spacing:-0.036px">POWER TRANSFER BUS</div>
<div class="sl" style="left:1632px;top:1000.76px;font-size:11px;letter-spacing:0.646px">( 0 / 12 )</div>
<svg class="ic" style="left:1697.9px;top:996.56px;width:20.8px;height:20.8px;fill:#f41010;"><use href="#i-closet"/></svg>
<div class="sl" style="left:1291.5px;top:1016.41px;letter-spacing:0.061px">MANUFACTURED :</div>
<div class="sl" style="left:1395.5px;top:1016.41px;letter-spacing:-0.058px"><b>C</b>HEMICAL DISTILLERY</div>
<div class="sl" style="left:1632px;top:1016.41px;font-size:11px;letter-spacing:0.646px">( 13 / 4 )</div>
<svg class="ic" style="left:1701.3px;top:1015.21px;width:13px;height:14px" viewBox="0 0 13 14"><path d="M1.0,8.3 L4.5,12.0 L11.9,1.0" fill="none" stroke="#048a04" stroke-width="2.4"/></svg>
<div class="sl" style="left:1291.5px;top:1032.06px;letter-spacing:0.061px">MANUFACTURED :</div>
<div class="sl" style="left:1395.5px;top:1032.06px;letter-spacing:-0.094px"><b>G</b>ALVANISING ALLOYS</div>
<div class="sl" style="left:1632px;top:1032.06px;font-size:11px;letter-spacing:0.723px">( 9 / 3 )</div>
<svg class="ic" style="left:1701.3px;top:1030.86px;width:13px;height:14px" viewBox="0 0 13 14"><path d="M1.0,8.3 L4.5,12.0 L11.9,1.0" fill="none" stroke="#048a04" stroke-width="2.4"/></svg>
<div class="sl" style="left:1291.5px;top:1047.7px;letter-spacing:0.061px">MANUFACTURED :</div>
<div class="sl" style="left:1395.5px;top:1047.7px;letter-spacing:-0.069px"><b>G</b>UARDIAN POWER <b>C</b>ONDUIT</div>
<div class="sl" style="left:1632px;top:1047.7px;font-size:11px;letter-spacing:0.587px">( 55 / 30 )</div>
<svg class="ic" style="left:1701.3px;top:1046.5px;width:13px;height:14px" viewBox="0 0 13 14"><path d="M1.0,8.3 L4.5,12.0 L11.9,1.0" fill="none" stroke="#048a04" stroke-width="2.4"/></svg>
<div class="sl" style="left:1291.5px;top:1063.35px;letter-spacing:0.061px">MANUFACTURED :</div>
<div class="sl" style="left:1395.5px;top:1063.35px;letter-spacing:-0.082px"><b>G</b>UARDIAN WRECKAGE <b>C</b>OMPONENTS</div>
<div class="sl" style="left:1632px;top:1063.35px;font-size:11px;letter-spacing:0.587px">( 42 / 30 )</div>
<svg class="ic" style="left:1701.3px;top:1062.14px;width:13px;height:14px" viewBox="0 0 13 14"><path d="M1.0,8.3 L4.5,12.0 L11.9,1.0" fill="none" stroke="#048a04" stroke-width="2.4"/></svg>
<div class="sl" style="left:1291.5px;top:1078.99px;letter-spacing:0.061px">MANUFACTURED :</div>
<div class="sl" style="left:1395.5px;top:1078.99px;letter-spacing:-0.012px">PHARMACEUTICAL ISOLATORS</div>
<div class="sl" style="left:1632px;top:1078.99px;font-size:11px;letter-spacing:0.646px">( 27 / 5 )</div>
<svg class="ic" style="left:1701.3px;top:1077.79px;width:13px;height:14px" viewBox="0 0 13 14"><path d="M1.0,8.3 L4.5,12.0 L11.9,1.0" fill="none" stroke="#048a04" stroke-width="2.4"/></svg>
<div class="sl" style="left:1291.5px;top:1094.63px;letter-spacing:0.303px">RAW :</div>
<div class="sl" style="left:1395.5px;top:1094.63px;letter-spacing:0.122px"><b>C</b>ADMIUM</div>
<div class="sl" style="left:1632px;top:1094.63px;font-size:11px;letter-spacing:0.646px">( 74 / 5 )</div>
<svg class="ic" style="left:1701.3px;top:1093.43px;width:13px;height:14px" viewBox="0 0 13 14"><path d="M1.0,8.3 L4.5,12.0 L11.9,1.0" fill="none" stroke="#048a04" stroke-width="2.4"/></svg>
<div class="sl" style="left:1291.5px;top:1110.28px;letter-spacing:0.303px">RAW :</div>
<div class="sl" style="left:1395.5px;top:1110.28px;letter-spacing:0.02px"><b>C</b>HROMIUM</div>
<div class="sl" style="left:1632px;top:1110.28px;font-size:11px;letter-spacing:0.587px">( 182 / 3 )</div>
<svg class="ic" style="left:1701.3px;top:1109.08px;width:13px;height:14px" viewBox="0 0 13 14"><path d="M1.0,8.3 L4.5,12.0 L11.9,1.0" fill="none" stroke="#048a04" stroke-width="2.4"/></svg>
<div class="sl" style="left:1291.5px;top:1125.92px;letter-spacing:0.303px">RAW :</div>
<div class="sl" style="left:1395.5px;top:1125.92px;letter-spacing:0.001px"><b>G</b>ERMANIUM</div>
<div class="sl" style="left:1632px;top:1125.92px;font-size:11px;letter-spacing:0.587px">( 25 / 24 )</div>
<svg class="ic" style="left:1701.3px;top:1124.72px;width:13px;height:14px" viewBox="0 0 13 14"><path d="M1.0,8.3 L4.5,12.0 L11.9,1.0" fill="none" stroke="#048a04" stroke-width="2.4"/></svg>
<div class="sl" style="left:1291.5px;top:1141.57px;letter-spacing:0.303px">RAW :</div>
<div class="sl" style="left:1395.5px;top:1141.57px;letter-spacing:-0.286px">IRON</div>
<div class="sl" style="left:1632px;top:1141.57px;font-size:11px;letter-spacing:0.646px">( 18 / 5 )</div>
<svg class="ic" style="left:1701.3px;top:1140.37px;width:13px;height:14px" viewBox="0 0 13 14"><path d="M1.0,8.3 L4.5,12.0 L11.9,1.0" fill="none" stroke="#048a04" stroke-width="2.4"/></svg>
<div class="sl" style="left:1291.5px;top:1157.21px;letter-spacing:0.303px">RAW :</div>
<div class="sl" style="left:1395.5px;top:1157.21px;letter-spacing:0.003px">MANGANESE</div>
<div class="sl" style="left:1632px;top:1157.21px;font-size:11px;letter-spacing:0.646px">( 56 / 4 )</div>
<svg class="ic" style="left:1701.3px;top:1156.01px;width:13px;height:14px" viewBox="0 0 13 14"><path d="M1.0,8.3 L4.5,12.0 L11.9,1.0" fill="none" stroke="#048a04" stroke-width="2.4"/></svg>
<div class="sl" style="left:1291.5px;top:1172.86px;letter-spacing:0.303px">RAW :</div>
<div class="sl" style="left:1395.5px;top:1172.86px;letter-spacing:-0.141px">PHOSPHORUS</div>
<div class="sl" style="left:1632px;top:1172.86px;font-size:11px;letter-spacing:0.646px">( 99 / 3 )</div>
<svg class="ic" style="left:1701.3px;top:1171.66px;width:13px;height:14px" viewBox="0 0 13 14"><path d="M1.0,8.3 L4.5,12.0 L11.9,1.0" fill="none" stroke="#048a04" stroke-width="2.4"/></svg>
<div class="sl" style="left:1291.5px;top:1188.5px;letter-spacing:0.303px">RAW :</div>
<div class="sl" style="left:1395.5px;top:1188.5px;letter-spacing:-0.089px"><b>S</b>ELENIUM</div>
<div class="sl" style="left:1632px;top:1188.5px;font-size:11px;letter-spacing:0.646px">( 24 / 4 )</div>
<svg class="ic" style="left:1701.3px;top:1187.3px;width:13px;height:14px" viewBox="0 0 13 14"><path d="M1.0,8.3 L4.5,12.0 L11.9,1.0" fill="none" stroke="#048a04" stroke-width="2.4"/></svg>
<div class="sl" style="left:1291.5px;top:1204.15px;letter-spacing:0.403px">DATA :</div>
<div class="sl" style="left:1395.5px;top:1204.15px;letter-spacing:-0.004px"><b>S</b>ECURITY FIRMWARE PATCH</div>
<div class="sl" style="left:1632px;top:1204.15px;font-size:11px;letter-spacing:0.723px">( 4 / 1 )</div>
<svg class="ic" style="left:1701.3px;top:1202.95px;width:13px;height:14px" viewBox="0 0 13 14"><path d="M1.0,8.3 L4.5,12.0 L11.9,1.0" fill="none" stroke="#048a04" stroke-width="2.4"/></svg>
<div class="sl" style="left:1291.5px;top:1219.79px;letter-spacing:0.403px">DATA :</div>
<div class="sl" style="left:1395.5px;top:1219.79px;letter-spacing:-0.114px"><b>S</b>PECIALISED LEGACY FIRMWARE</div>
<div class="sl" style="left:1632px;top:1219.79px;font-size:11px;letter-spacing:0.723px">( 7 / 6 )</div>
<svg class="ic" style="left:1701.3px;top:1218.59px;width:13px;height:14px" viewBox="0 0 13 14"><path d="M1.0,8.3 L4.5,12.0 L11.9,1.0" fill="none" stroke="#048a04" stroke-width="2.4"/></svg>
<div class="t" style="left:2325.5px;top:737.8px;height:14px;line-height:14px;font-size:11px;color:#6b8e23;letter-spacing:.62px;opacity:.85">Material Trader</div>
<svg class="ic" style="left:2444.5px;top:734.5px;width:19px;height:19px;fill:#19c4e6;"><use href="#i-info"/></svg>
<div class="mt" style="top:758px"><svg class="ic" style="left:5.6px;top:3.8px;width:10.4px;height:16.8px" viewBox="0 0 10 16"><path d="M1,1 L8.2,8 L1,15" fill="none" stroke="#ff7100" stroke-width="2.2"/></svg><svg class="ic" style="left:36px;top:4.8px;width:19px;height:15.5px;color:#ff7100"><use href="#g1"/></svg><div class="mtt" style="left:57.5px;font-size:11px">7</div><div class="mtt" style="width:181.2px;overflow:hidden;letter-spacing:-0.032px">ATYPICAL DISRUPTED WAKE ECHOES</div><svg class="ic" style="left:272.5px;top:2.5px;width:19px;height:19px;fill:#ff7100"><use href="#i-info"/></svg></div>
<div class="mt" style="top:786px"><svg class="ic" style="left:5.6px;top:3.8px;width:10.4px;height:16.8px" viewBox="0 0 10 16"><path d="M1,1 L8.2,8 L1,15" fill="none" stroke="#ff7100" stroke-width="2.2"/></svg><svg class="ic" style="left:36px;top:4.8px;width:19px;height:15.5px;color:#ff7100"><use href="#g4"/></svg><div class="mtt" style="left:57.5px;font-size:11px">3</div><div class="mtt" style="width:181.2px;overflow:hidden;letter-spacing:0.064px"><b>C</b>HEMICAL MANIPULATORS</div><svg class="ic" style="left:272.5px;top:2.5px;width:19px;height:19px;fill:#ff7100"><use href="#i-info"/></svg></div>
<div class="mt" style="top:814px"><svg class="ic" style="left:5.6px;top:3.8px;width:10.4px;height:16.8px" viewBox="0 0 10 16"><path d="M1,1 L8.2,8 L1,15" fill="none" stroke="#ff7100" stroke-width="2.2"/></svg><svg class="ic" style="left:36px;top:4.8px;width:19px;height:15.5px;color:#ff7100"><use href="#g2"/></svg><div class="mtt" style="left:57.5px;font-size:11px">3</div><div class="mtt" style="width:181.2px;overflow:hidden;letter-spacing:-0.188px"><b>C</b>HEMICAL PROCESSORS</div><svg class="ic" style="left:272.5px;top:2.5px;width:19px;height:19px;fill:#ff7100"><use href="#i-info"/></svg></div>
<div class="mt" style="top:842px"><svg class="ic" style="left:5.6px;top:3.8px;width:10.4px;height:16.8px" viewBox="0 0 10 16"><path d="M1,1 L8.2,8 L1,15" fill="none" stroke="#ff7100" stroke-width="2.2"/></svg><svg class="ic" style="left:36px;top:4.8px;width:19px;height:15.5px;color:#ff7100"><use href="#g3"/></svg><div class="mtt" style="left:57.5px;font-size:11px">3</div><div class="mtt" style="width:181.2px;overflow:hidden;letter-spacing:0.012px"><b>C</b>RACKED INDUSTRIAL FIRMWARE</div><svg class="ic" style="left:272.5px;top:2.5px;width:19px;height:19px;fill:#ff7100"><use href="#i-info"/></svg></div>
<div class="mt" style="top:870px"><svg class="ic" style="left:5.6px;top:3.8px;width:10.4px;height:16.8px" viewBox="0 0 10 16"><path d="M1,1 L8.2,8 L1,15" fill="none" stroke="#ff7100" stroke-width="2.2"/></svg><svg class="ic" style="left:36px;top:4.8px;width:19px;height:15.5px;color:#ff7100"><use href="#g5"/></svg><div class="mtt" style="left:57.5px;font-size:11px">5</div><div class="mtt" style="width:181.2px;overflow:hidden;letter-spacing:0.061px">DATAMINED WAKE EXCEPTIONS</div><svg class="ic" style="left:272.5px;top:2.5px;width:19px;height:19px;fill:#ff7100"><use href="#i-info"/></svg></div>
<div class="mt" style="top:898px"><svg class="ic" style="left:5.6px;top:3.8px;width:10.4px;height:16.8px" viewBox="0 0 10 16"><path d="M1,1 L8.2,8 L1,15" fill="none" stroke="#ff7100" stroke-width="2.2"/></svg><svg class="ic" style="left:36px;top:4.8px;width:19px;height:15.5px;color:#ff7100"><use href="#g4"/></svg><div class="mtt" style="left:57.5px;font-size:11px">3</div><div class="mtt" style="width:181.2px;overflow:hidden;letter-spacing:-0.168px">ECCENTRIC HYPERSPACE TRAJECTORIES</div><svg class="ic" style="left:272.5px;top:2.5px;width:19px;height:19px;fill:#ff7100"><use href="#i-info"/></svg></div>
<div class="mt" style="top:926px"><svg class="ic" style="left:5.6px;top:3.8px;width:10.4px;height:16.8px" viewBox="0 0 10 16"><path d="M1,1 L8.2,8 L1,15" fill="none" stroke="#ff7100" stroke-width="2.2"/></svg><svg class="ic" style="left:36px;top:4.8px;width:19px;height:15.5px;color:#ff7100"><use href="#g2"/></svg><div class="mtt" style="left:57.5px;font-size:11px">3</div><div class="mtt" style="width:181.2px;overflow:hidden;letter-spacing:-0.118px">HYBRID <b>C</b>APACITORS</div><svg class="ic" style="left:272.5px;top:2.5px;width:19px;height:19px;fill:#ff7100"><use href="#i-info"/></svg></div>
<div class="mt" style="top:954px"><svg class="ic" style="left:5.6px;top:3.8px;width:10.4px;height:16.8px" viewBox="0 0 10 16"><path d="M1,1 L8.2,8 L1,15" fill="none" stroke="#ff7100" stroke-width="2.2"/></svg><svg class="ic" style="left:36px;top:4.8px;width:19px;height:15.5px;color:#ff7100"><use href="#g3"/></svg><div class="mtt" style="left:57.5px;font-size:11px">2</div><div class="mtt" style="width:181.2px;overflow:hidden;letter-spacing:0.008px">MECHANICAL <b>C</b>OMPONENTS</div><svg class="ic" style="left:272.5px;top:2.5px;width:19px;height:19px;fill:#ff7100"><use href="#i-info"/></svg></div>
<div class="mt" style="top:982px"><svg class="ic" style="left:5.6px;top:3.8px;width:10.4px;height:16.8px" viewBox="0 0 10 16"><path d="M1,1 L8.2,8 L1,15" fill="none" stroke="#ff7100" stroke-width="2.2"/></svg><svg class="ic" style="left:36px;top:4.8px;width:19px;height:15.5px;color:#ff7100"><use href="#g2"/></svg><div class="mtt" style="left:57.5px;font-size:11px">2</div><div class="mtt" style="width:181.2px;overflow:hidden;letter-spacing:0.06px">MECHANICAL EQUIPMENT</div><svg class="ic" style="left:272.5px;top:2.5px;width:19px;height:19px;fill:#ff7100"><use href="#i-info"/></svg></div>
<div class="mt" style="top:1010px"><svg class="ic" style="left:5.6px;top:3.8px;width:10.4px;height:16.8px" viewBox="0 0 10 16"><path d="M1,1 L8.2,8 L1,15" fill="none" stroke="#ff7100" stroke-width="2.2"/></svg><svg class="ic" style="left:36px;top:4.8px;width:19px;height:15.5px;color:#ff7100"><use href="#g2"/></svg><div class="mtt" style="left:57.5px;font-size:11px">2</div><div class="mtt" style="width:181.2px;overflow:hidden;letter-spacing:0.006px">MODIFIED <b>C</b>ONSUMER FIRMWARE</div><svg class="ic" style="left:272.5px;top:2.5px;width:19px;height:19px;fill:#ff7100"><use href="#i-info"/></svg></div>
<div class="mt" style="top:1038px"><svg class="ic" style="left:5.6px;top:3.8px;width:10.4px;height:16.8px" viewBox="0 0 10 16"><path d="M1,1 L8.2,8 L1,15" fill="none" stroke="#ff7100" stroke-width="2.2"/></svg><svg class="ic" style="left:36px;top:4.8px;width:19px;height:15.5px;color:#ff7100"><use href="#g3"/></svg><div class="mtt" style="left:57.5px;font-size:11px">3</div><div class="mtt" style="width:181.2px;overflow:hidden;letter-spacing:-0.102px"><b>S</b>TRANGE WAKE <b>S</b>OLUTIONS</div><svg class="ic" style="left:272.5px;top:2.5px;width:19px;height:19px;fill:#ff7100"><use href="#i-info"/></svg></div>
<div class="wl" style="left:2243px;top:1072px;width:300px;height:57px;background:#332839"></div>
<div class="a" style="left:2248.8px;top:1077.5px;width:17px;height:17px;border-radius:50%;background:#858585;background-clip:padding-box;border:2px solid rgba(92,104,84,.62)"></div>
<div class="wt" style="left:2393px;top:1075.5px;letter-spacing:0.352px">FSD IFR</div>
<svg class="ic" style="left:2525px;top:1071px;width:18px;height:18px;fill:#a81820;"><use href="#i-closet"/></svg>
<div class="wg" style="left:2295.0px;top:1090.5px">G1</div>
<div class="wn" style="left:2295.0px;top:1109.5px">0</div>
<div class="a" style="left:2279.5px;top:1116px;width:6px;height:2px;background:#a01822"></div>
<svg class="ic" style="left:2305.5px;top:1111.5px;width:11px;height:11px" viewBox="0 0 11 11"><path d="M0.3,5.5 H10.7 M5.5,0.3 V10.7" stroke="#1d6a2e" stroke-width="2.1" fill="none"/></svg>
<div class="a" style="left:2321.0px;top:1114px;width:1px;height:15px;background:#7f96a6"></div>
<div class="wg" style="left:2342.4px;top:1090.5px">G2</div>
<div class="wn" style="left:2342.4px;top:1109.5px">2</div>
<div class="a" style="left:2326.9px;top:1116px;width:6px;height:2px;background:#a01822"></div>
<svg class="ic" style="left:2352.9px;top:1111.5px;width:11px;height:11px" viewBox="0 0 11 11"><path d="M0.3,5.5 H10.7 M5.5,0.3 V10.7" stroke="#1d6a2e" stroke-width="2.1" fill="none"/></svg>
<div class="a" style="left:2368.4px;top:1114px;width:1px;height:15px;background:#7f96a6"></div>
<div class="wg" style="left:2389.8px;top:1090.5px">G3</div>
<div class="wn" style="left:2389.8px;top:1109.5px">3</div>
<div class="a" style="left:2374.3px;top:1116px;width:6px;height:2px;background:#a01822"></div>
<svg class="ic" style="left:2400.3px;top:1111.5px;width:11px;height:11px" viewBox="0 0 11 11"><path d="M0.3,5.5 H10.7 M5.5,0.3 V10.7" stroke="#1d6a2e" stroke-width="2.1" fill="none"/></svg>
<div class="a" style="left:2415.8px;top:1114px;width:1px;height:15px;background:#7f96a6"></div>
<div class="wg" style="left:2437.2px;top:1090.5px">G4</div>
<div class="wn" style="left:2437.2px;top:1109.5px">4</div>
<div class="a" style="left:2421.7px;top:1116px;width:6px;height:2px;background:#a01822"></div>
<svg class="ic" style="left:2447.7px;top:1111.5px;width:11px;height:11px" viewBox="0 0 11 11"><path d="M0.3,5.5 H10.7 M5.5,0.3 V10.7" stroke="#1d6a2e" stroke-width="2.1" fill="none"/></svg>
<div class="a" style="left:2463.2px;top:1114px;width:1px;height:15px;background:#7f96a6"></div>
<div class="wg" style="left:2484.6px;top:1090.5px">G5</div>
<div class="wn" style="left:2484.6px;top:1109.5px">5</div>
<div class="a" style="left:2469.1px;top:1116px;width:6px;height:2px;background:#a01822"></div>
<svg class="ic" style="left:2495.1px;top:1111.5px;width:11px;height:11px" viewBox="0 0 11 11"><path d="M0.3,5.5 H10.7 M5.5,0.3 V10.7" stroke="#1d6a2e" stroke-width="2.1" fill="none"/></svg>
<div class="wl" style="left:2243px;top:1135px;width:300px;height:57px;background:#332839"></div>
<div class="a" style="left:2248.8px;top:1140.5px;width:17px;height:17px;border-radius:50%;background:#858585;background-clip:padding-box;border:2px solid rgba(92,104,84,.62)"></div>
<div class="wt" style="left:2393px;top:1138.5px;letter-spacing:0.584px">T DDT</div>
<svg class="ic" style="left:2525px;top:1134px;width:18px;height:18px;fill:#a81820;"><use href="#i-closet"/></svg>
<div class="wg" style="left:2295.0px;top:1153.5px">G1</div>
<div class="wn" style="left:2295.0px;top:1172.5px">1</div>
<div class="a" style="left:2279.5px;top:1179px;width:6px;height:2px;background:#a01822"></div>
<svg class="ic" style="left:2305.5px;top:1174.5px;width:11px;height:11px" viewBox="0 0 11 11"><path d="M0.3,5.5 H10.7 M5.5,0.3 V10.7" stroke="#1d6a2e" stroke-width="2.1" fill="none"/></svg>
<div class="a" style="left:2321.0px;top:1177px;width:1px;height:15px;background:#7f96a6"></div>
<div class="wg" style="left:2342.4px;top:1153.5px">G2</div>
<div class="wn" style="left:2342.4px;top:1172.5px">2</div>
<div class="a" style="left:2326.9px;top:1179px;width:6px;height:2px;background:#a01822"></div>
<svg class="ic" style="left:2352.9px;top:1174.5px;width:11px;height:11px" viewBox="0 0 11 11"><path d="M0.3,5.5 H10.7 M5.5,0.3 V10.7" stroke="#1d6a2e" stroke-width="2.1" fill="none"/></svg>
<div class="a" style="left:2368.4px;top:1177px;width:1px;height:15px;background:#7f96a6"></div>
<div class="wg" style="left:2389.8px;top:1153.5px">G3</div>
<div class="wn" style="left:2389.8px;top:1172.5px">3</div>
<div class="a" style="left:2374.3px;top:1179px;width:6px;height:2px;background:#a01822"></div>
<svg class="ic" style="left:2400.3px;top:1174.5px;width:11px;height:11px" viewBox="0 0 11 11"><path d="M0.3,5.5 H10.7 M5.5,0.3 V10.7" stroke="#1d6a2e" stroke-width="2.1" fill="none"/></svg>
<div class="a" style="left:2415.8px;top:1177px;width:1px;height:15px;background:#7f96a6"></div>
<div class="wg" style="left:2437.2px;top:1153.5px">G4</div>
<div class="wn" style="left:2437.2px;top:1172.5px">4</div>
<div class="a" style="left:2421.7px;top:1179px;width:6px;height:2px;background:#a01822"></div>
<svg class="ic" style="left:2447.7px;top:1174.5px;width:11px;height:11px" viewBox="0 0 11 11"><path d="M0.3,5.5 H10.7 M5.5,0.3 V10.7" stroke="#1d6a2e" stroke-width="2.1" fill="none"/></svg>
<div class="a" style="left:2463.2px;top:1177px;width:1px;height:15px;background:#7f96a6"></div>
<div class="wg" style="left:2484.6px;top:1153.5px">G5</div>
<div class="wn" style="left:2484.6px;top:1172.5px">5</div>
<div class="a" style="left:2469.1px;top:1179px;width:6px;height:2px;background:#a01822"></div>
<svg class="ic" style="left:2495.1px;top:1174.5px;width:11px;height:11px" viewBox="0 0 11 11"><path d="M0.3,5.5 H10.7 M5.5,0.3 V10.7" stroke="#1d6a2e" stroke-width="2.1" fill="none"/></svg>
<div class="wl" style="left:2243px;top:1198px;width:96px;height:56px;background:#2e1f48"></div>
<div class="wt" style="left:2291px;top:1201px;letter-spacing:0.56px">TEC G MSCFM</div>
<svg class="ic" style="left:2321px;top:1197px;width:18px;height:18px;fill:#a81820;"><use href="#i-closet"/></svg>
<svg class="ic" style="left:2283.5px;top:1217px;width:10px;height:10px"><path d="M5,1 L9,5 L5,9 L1,5 Z" fill="none" stroke="#f7e2b8" stroke-width="1.3"/></svg>
<div class="wn" style="left:2288px;top:1235px">6</div>
<div class="a" style="left:2272.5px;top:1242px;width:6px;height:2px;background:#a01822"></div>
<svg class="ic" style="left:2298.5px;top:1237.5px;width:11px;height:11px" viewBox="0 0 11 11"><path d="M0.3,5.5 H10.7 M5.5,0.3 V10.7" stroke="#1d6a2e" stroke-width="2.1" fill="none"/></svg>
<div class="wl" style="left:2345px;top:1198px;width:96px;height:56px;background:#2e1f48"></div>
<div class="wt" style="left:2393px;top:1201px;letter-spacing:0.56px">TEC G MPCFM</div>
<svg class="ic" style="left:2423px;top:1197px;width:18px;height:18px;fill:#a81820;"><use href="#i-closet"/></svg>
<svg class="ic" style="left:2385.5px;top:1217px;width:10px;height:10px"><path d="M5,1 L9,5 L5,9 L1,5 Z" fill="none" stroke="#f7e2b8" stroke-width="1.3"/></svg>
<div class="wn" style="left:2390px;top:1235px">6</div>
<div class="a" style="left:2374.5px;top:1242px;width:6px;height:2px;background:#a01822"></div>
<svg class="ic" style="left:2400.5px;top:1237.5px;width:11px;height:11px" viewBox="0 0 11 11"><path d="M0.3,5.5 H10.7 M5.5,0.3 V10.7" stroke="#1d6a2e" stroke-width="2.1" fill="none"/></svg>
<div class="wl" style="left:2447px;top:1198px;width:96px;height:56px;background:#232744"></div>
<div class="wt" style="left:2500.5px;top:1201px;letter-spacing:0.95px">EXP FSD MM</div>
<svg class="ic" style="left:2525px;top:1197px;width:18px;height:18px;fill:#a81820;"><use href="#i-closet"/></svg>
<svg class="ic" style="left:2487.5px;top:1217px;width:10px;height:10px"><path d="M5,1 L9,5 L5,9 L1,5 Z" fill="none" stroke="#f7e2b8" stroke-width="1.3"/></svg>
<div class="wn" style="left:2492px;top:1235px">1</div>
<div class="a" style="left:2476.5px;top:1242px;width:6px;height:2px;background:#a01822"></div>
<svg class="ic" style="left:2502.5px;top:1237.5px;width:11px;height:11px" viewBox="0 0 11 11"><path d="M0.3,5.5 H10.7 M5.5,0.3 V10.7" stroke="#1d6a2e" stroke-width="2.1" fill="none"/></svg>
<div class="wl" style="left:2243px;top:1260px;width:96px;height:60px;background:#232744"></div>
<div class="wt" style="left:2291px;top:1263px;letter-spacing:0.717px">EXP T DD</div>
<svg class="ic" style="left:2321px;top:1259px;width:18px;height:18px;fill:#a81820;"><use href="#i-closet"/></svg>
<svg class="ic" style="left:2283.5px;top:1279px;width:10px;height:10px"><path d="M5,1 L9,5 L5,9 L1,5 Z" fill="none" stroke="#f7e2b8" stroke-width="1.3"/></svg>
<div class="wn" style="left:2288px;top:1297px">1</div>
<div class="a" style="left:2272.5px;top:1304px;width:6px;height:2px;background:#a01822"></div>
<svg class="ic" style="left:2298.5px;top:1299.5px;width:11px;height:11px" viewBox="0 0 11 11"><path d="M0.3,5.5 H10.7 M5.5,0.3 V10.7" stroke="#1d6a2e" stroke-width="2.1" fill="none"/></svg>
</body></html>
